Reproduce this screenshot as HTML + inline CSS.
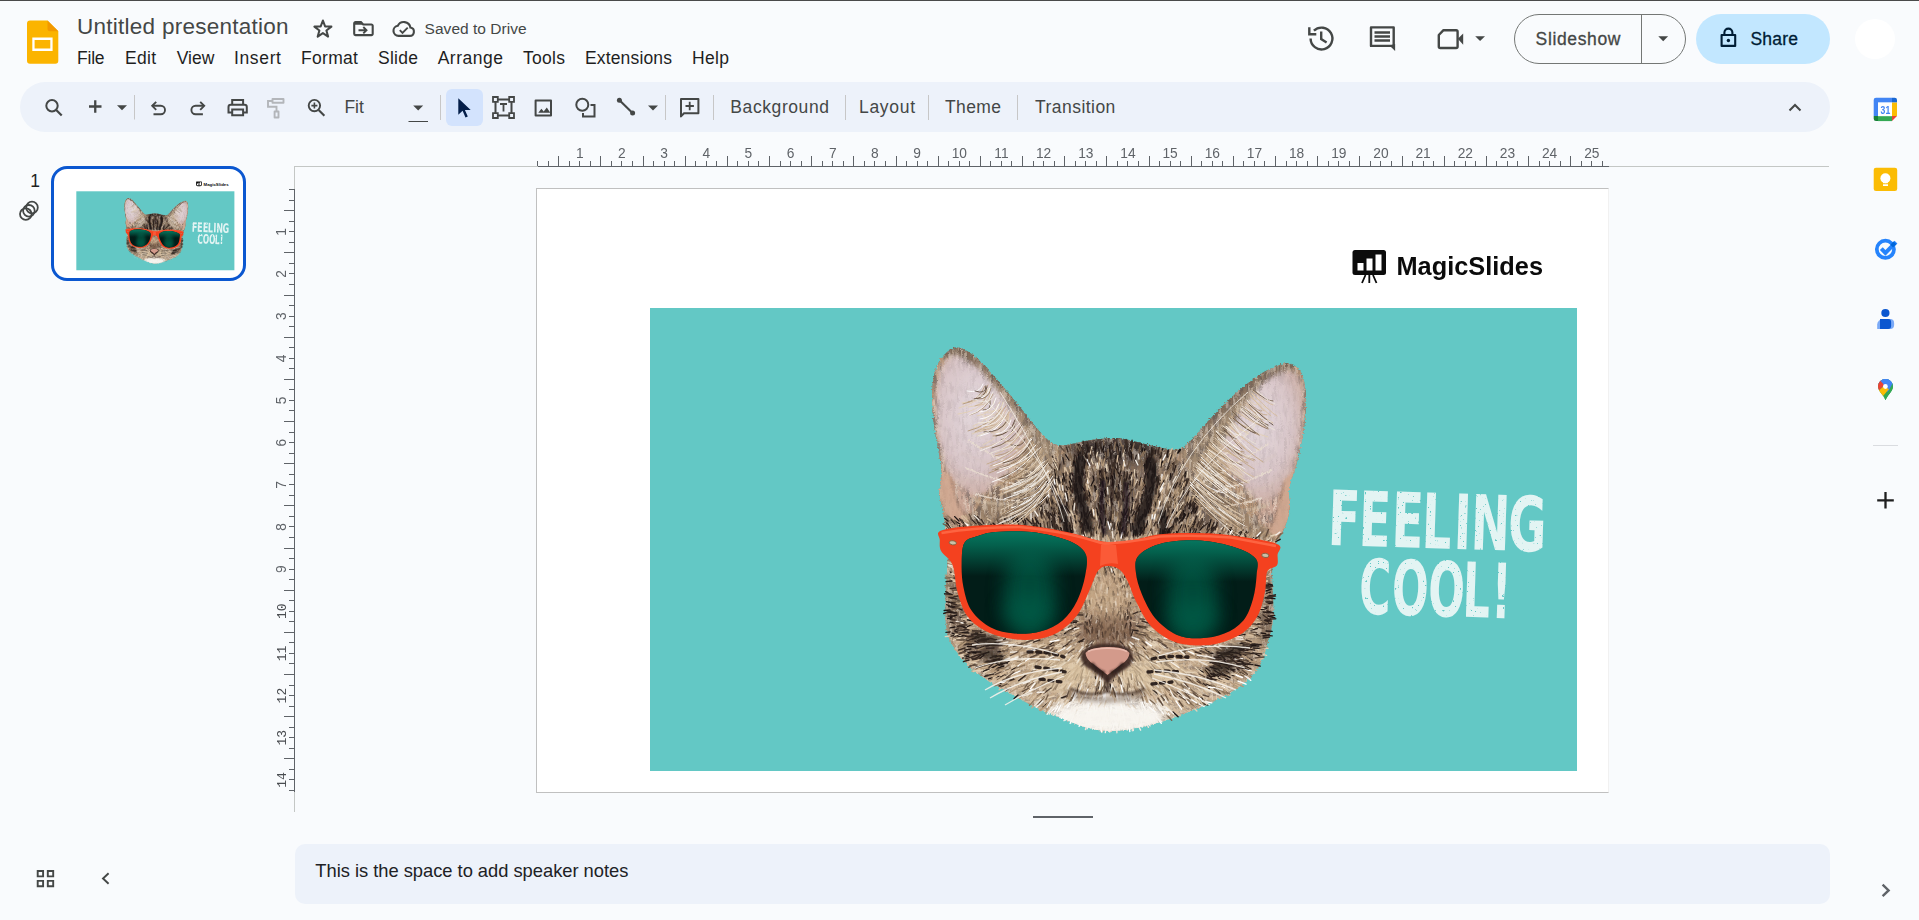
<!DOCTYPE html>
<html lang="en">
<head>
<meta charset="utf-8">
<title>Untitled presentation - Google Slides</title>
<style>
*{box-sizing:border-box;margin:0;padding:0}
html,body{width:1919px;height:920px;overflow:hidden;background:#f9fbfd;font-family:"Liberation Sans",sans-serif;color:#444746}
#app{position:relative;width:1919px;height:920px;overflow:hidden;background:#f9fbfd}
.abs{position:absolute}
.t{position:absolute;white-space:nowrap;line-height:1;font-size:17.5px;color:#444746}
#topline{left:0;top:0;width:1919px;height:1px;background:#4a4a4a}
#toolbar{left:20px;top:82px;width:1810px;height:50px;border-radius:25px;background:#edf2fa}
#selbtn{left:446px;top:89px;width:37px;height:37px;border-radius:6px;background:#d3e3fd}
#slideshow{left:1514px;top:14px;width:172px;height:50px;border-radius:25px;border:1px solid #747775}
#ssdiv{left:1641px;top:14px;width:1px;height:50px;background:#747775}
#share{left:1696px;top:14px;width:134px;height:50px;border-radius:25px;background:#c2e7ff}
#avatar{left:1855px;top:19px;width:40px;height:40px;border-radius:50%;background:#fff}
#thumb{left:51px;top:166px;width:195px;height:115px;border-radius:16px;border:3px solid #0b57d0;background:#fff;overflow:hidden}
#slide{left:536px;top:188px;width:1073px;height:605px;background:#fff;border:1px solid #c0c0c0;border-right-color:#f1f1f1}
#notes{left:295px;top:844px;width:1535px;height:60px;border-radius:10px;background:#edf2fa}
#handle{left:1033px;top:816px;width:60px;height:2px;background:#5f6368}
.menu{color:#1f1f1f}
</style>
</head>
<body>
<div id="app">
<div class="abs" id="topline"></div>

<!-- header text -->
<div class="t" id="title" style="color:#444746;left:77.1px;top:16.4px;font-size:22.5px;letter-spacing:0.25px">Untitled presentation</div>
<div class="t" id="saved" style="left:424.6px;top:21.3px;font-size:15.5px;letter-spacing:0.03px">Saved to Drive</div>
<div class="t menu" id="m1" style="left:77.0px;top:49.8px;font-size:17.5px;letter-spacing:-0.20px">File</div>
<div class="t menu" id="m2" style="left:125.0px;top:49.8px;font-size:17.5px;letter-spacing:0.28px">Edit</div>
<div class="t menu" id="m3" style="left:176.8px;top:49.8px;font-size:17.5px;letter-spacing:-0.04px">View</div>
<div class="t menu" id="m4" style="left:234.0px;top:49.8px;font-size:17.5px;letter-spacing:0.64px">Insert</div>
<div class="t menu" id="m5" style="left:301.0px;top:49.8px;font-size:17.5px;letter-spacing:0.31px">Format</div>
<div class="t menu" id="m6" style="left:378.0px;top:49.8px;font-size:17.5px;letter-spacing:0.27px">Slide</div>
<div class="t menu" id="m7" style="left:437.7px;top:49.8px;font-size:17.5px;letter-spacing:0.51px">Arrange</div>
<div class="t menu" id="m8" style="left:523.0px;top:49.8px;font-size:17.5px;letter-spacing:0.29px">Tools</div>
<div class="t menu" id="m9" style="left:585.0px;top:49.8px;font-size:17.5px;letter-spacing:0.15px">Extensions</div>
<div class="t menu" id="m10" style="left:692.0px;top:49.8px;font-size:17.5px;letter-spacing:0.33px">Help</div>

<div class="abs" id="slideshow"></div>
<div class="abs" id="ssdiv"></div>
<div class="abs" id="share"></div>
<div class="abs" id="avatar"></div>
<div class="t" id="sstext" style="-webkit-text-stroke:.3px #444746;left:1535.6px;color:#444746;top:31.2px;font-size:17.5px;letter-spacing:0.64px">Slideshow</div>
<div class="t" id="sharetext" style="-webkit-text-stroke:.3px #001d35;left:1750.4px;color:#001d35;top:30.6px;font-size:17.5px;letter-spacing:0.22px">Share</div>

<!-- toolbar -->
<div class="abs" id="toolbar"></div>
<div class="abs" id="selbtn"></div>
<div class="t" id="fit" style="left:344.4px;top:99.1px;font-size:17.5px;letter-spacing:0.00px">Fit</div>
<div class="t" id="tb1" style="left:730.3px;top:99.2px;font-size:17.5px;letter-spacing:0.59px">Background</div>
<div class="t" id="tb2" style="left:859.0px;top:99.2px;font-size:17.5px;letter-spacing:0.69px">Layout</div>
<div class="t" id="tb3" style="left:945.0px;top:99.2px;font-size:17.5px;letter-spacing:0.38px">Theme</div>
<div class="t" id="tb4" style="left:1035.0px;top:99.2px;font-size:17.5px;letter-spacing:0.46px">Transition</div>

<!-- ICONS-HEADER -->
<svg class="abs" id="hdricons" style="left:0;top:0" width="1919" height="140" viewBox="0 0 1919 140" fill="none" stroke="#444746" stroke-width="2" stroke-linecap="butt" stroke-linejoin="miter">
<!-- slides logo -->
<g stroke="none">
<path d="M30 20.5h17.5l10.8 10.8v29.4a3 3 0 0 1-3 3H30a3 3 0 0 1-3-3V23.5a3 3 0 0 1 3-3z" fill="#fbb400"/>
<path d="M47.5 20.5l10.8 10.8H50a2.5 2.5 0 0 1-2.500-2.500z" fill="#f29900"/>
<path d="M32.300 37.600h20.300v13.300H32.300z M34.600 39.900v8.700h15.700v-8.700z" fill="#fff" fill-rule="evenodd"/>
</g>
<!-- star -->
<path d="M322.9 20.5L325.1 26.4L331.4 26.6L326.4 30.5L328.1 36.6L322.9 33.1L317.7 36.6L319.4 30.5L314.4 26.6L320.7 26.4z" stroke-width="2.050" stroke-linejoin="round"/>
<!-- move folder -->
<path d="M354.200 23.300a1.300 1.300 0 0 1 1.300-1.300h5.400l2.300 2.500h8.200a1.300 1.300 0 0 1 1.300 1.300v8a1.300 1.300 0 0 1-1.300 1.300h-15.900a1.300 1.300 0 0 1-1.300-1.300z" stroke-width="2.100"/><path d="M354.200 22h7l2 2.800h-9z" fill="#444746" stroke="none"/>
<path d="M358.500 30.200h7.500M363.300 27l3.200 3.200-3.200 3.200" stroke-width="1.900"/>
<!-- cloud done -->
<g transform="translate(0 .9)"><path d="M398.500 35h11.200a4.200 4.200 0 0 0 .700-8.340a6.700 6.700 0 0 0-12.600-1.800a5.100 5.100 0 0 0 .700 10.140z" stroke-width="2.100"/>
<path d="M399.800 29.300l2.700 2.700 5.200-5.200" stroke-width="1.900"/></g>
<!-- history -->
<g stroke-width="2.400">
<path d="M1310.600 38.500a10.900 10.900 0 1 0 3.300-7.800"/>
<path d="M1309.300 27.300v7h7" stroke-linejoin="miter"/>
<path d="M1321.200 31.500v7.600l5.400 3.300"/>
</g>
<!-- comment -->
<path d="M1371 27.400h22.700v18.500h-22.700z" stroke-width="2.400" stroke-linejoin="round"/>
<path d="M1389.500 45.500l5.600 5.500v-7z" fill="#444746" stroke="none"/>
<path d="M1374.500 32.500h15.500M1374.500 36.500h15.500M1374.500 40.500h15.500" stroke-width="2.300"/>
<!-- camera -->
<path d="M1443.500 30.200h12.600a1.500 1.500 0 0 1 1.500 1.500v14.800a1.500 1.500 0 0 1-1.500 1.500h-15.800a1.500 1.500 0 0 1-1.500-1.500v-11.500z" stroke-width="2.400" stroke-linejoin="round"/>
<path d="M1457.800 38.800l5.400-5.400v11.400z" fill="#444746" stroke="none"/>
<path d="M1475.200 36.200h9.800l-4.900 4.900z" fill="#444746" stroke="none"/>
<!-- slideshow caret -->
<path d="M1658.300 36.300h9.800l-4.900 4.900z" fill="#444746" stroke="none"/>
<!-- lock -->
<g stroke="#001d35" stroke-width="2.100">
<path d="M1721.600 35h13.600v10.900h-13.600z" stroke-linejoin="round"/>
<path d="M1724.400 35v-2.400a4 4 0 0 1 8 0v2.400"/>
<circle cx="1728.400" cy="40.500" r="1.700" fill="#001d35" stroke="none"/>
</g>

<!-- TOOLBAR ICONS -->
<!-- search -->
<circle cx="52" cy="105.700" r="5.700" stroke-width="2"/>
<path d="M56.200 110l5.500 5.500" stroke-width="2.200"/>
<!-- plus -->
<path d="M89 106.500h12.500M95.250 100.300v12.500" stroke-width="2.300"/>
<path d="M117 105.200h10l-5 5z" fill="#444746" stroke="none"/>
<path d="M134.500 95v24.500" stroke="#c7c7c7" stroke-width="1"/>
<!-- undo -->
<path d="M156.200 101.800l-4 4 4 4" stroke-width="1.900"/>
<path d="M152.500 105.800h8.300a4.200 4.200 0 0 1 0 8.400h-7.300" stroke-width="1.900"/>
<!-- redo -->
<path d="M200.200 101.800l4 4-4 4" stroke-width="1.900"/>
<path d="M203.900 105.800h-8.300a4.200 4.200 0 0 0 0 8.400h7.300" stroke-width="1.900"/>
<!-- print -->
<g stroke-width="2">
<path d="M232 112.400h-3.500v-5.400a2.300 2.300 0 0 1 2.300-2.300h13.700a2.300 2.300 0 0 1 2.300 2.300v5.400h-3.500"/>
<path d="M232.200 104.500v-4.500h10.900v4.500"/>
<path d="M232.200 109.500h10.900v5.800h-10.900z"/>
</g>
<!-- paint format (disabled) -->
<g stroke="#b3b6ba" stroke-width="1.900">
<path d="M272.500 99h11v3.800h-11z" stroke-linejoin="round"/>
<path d="M272.500 101h-4.500v5.800h8.500v4.500"/>
<path d="M274.600 111.500h3.900v6h-3.900z" stroke-linejoin="round"/>
</g>
<!-- zoom -->
<circle cx="314.400" cy="105.600" r="5.700" stroke-width="1.900"/>
<path d="M318.600 109.900l5.800 5.800" stroke-width="2.100"/>
<path d="M311.400 105.600h6M314.400 102.600v6" stroke-width="1.600"/>
<!-- fit caret -->
<path d="M413.200 105.400h10l-5 5z" fill="#444746" stroke="none"/>
<path d="M408.500 121.500h19.500" stroke-width="1"/>
<path d="M440.500 95v25" stroke="#c7c7c7" stroke-width="1"/>
<!-- cursor -->
<path d="M458.300 98.200v16.500l4.300-3.900 2.900 6.600 2.300-1-2.900-6.500h5.800z" fill="#041e49" stroke="none"/>
<!-- textbox -->
<g stroke-width="2">
<path d="M495.500 99.500h16v16h-16z"/>
<g fill="#edf2fa" stroke-width="1.800"><path d="M493 97h4.800v4.800H493zM509.200 97h4.800v4.800h-4.800zM493 113.200h4.800v4.800H493zM509.200 113.200h4.800v4.800h-4.800z"/></g>
<path d="M500 104h7M503.500 104v7.500" stroke-width="1.800"/>
</g>
<!-- image -->
<path d="M535.600 100.400h15.400v15.200h-15.400z" stroke-width="2" stroke-linejoin="round"/>
<path d="M538.300 112.700l3.100-4 2.300 2.800 3.100-4.100 3.500 5.300z" fill="#444746" stroke="none"/>
<!-- shapes -->
<circle cx="582.300" cy="104.700" r="6" stroke-width="2"/>
<path d="M590.500 105h4v11.500h-11.500v-3.500" stroke-width="2"/>
<!-- line -->
<path d="M619.500 100.300l13 12.800" stroke-width="2.100"/>
<circle cx="619.400" cy="100.200" r="2.500" fill="#444746" stroke="none"/>
<circle cx="632.600" cy="113" r="2.500" fill="#444746" stroke="none"/>
<path d="M648 105.400h10l-5 5z" fill="#444746" stroke="none"/>
<path d="M665.500 95v25" stroke="#c7c7c7" stroke-width="1"/>
<!-- add comment -->
<path d="M681 113.200v-14.200h17.400v14.200h-14.400l-3 3.200z" stroke-width="2" stroke-linejoin="round"/>
<path d="M685.500 106h8.400M689.700 101.800v8.400" stroke-width="1.800"/>
<path d="M713.500 95v25" stroke="#c7c7c7" stroke-width="1"/>
<path d="M845.500 95v25M928.500 95v25M1017.500 95v25" stroke="#c7c7c7" stroke-width="1"/>
<!-- collapse chevron -->
<path d="M1789.500 110.500l5.500-5.500 5.500 5.500" stroke-width="2"/>
</svg>
<!-- /ICONS-HEADER -->

<!-- filmstrip -->
<div class="t" id="num1" style="left:30.3px;color:#1f1f1f;top:173.1px;font-size:17.5px;letter-spacing:0.00px">1</div>
<div class="abs" id="thumb"><!-- THUMB --><svg class="abs" id="thumbsvg" style="left:3.300px;top:2.300px" width="182.900" height="103" viewBox="537 189 1072 604">
<rect x="650" y="308" width="927" height="463" fill="#63c8c5"/>
<use href="#cat"/>
<use href="#mslogo"/>
<text x="1396.500" y="275.300" font-family="'Liberation Sans',sans-serif" font-weight="700" font-size="25.500" fill="#0b0b0b" textLength="146.500" lengthAdjust="spacingAndGlyphs">MagicSlides</text>
<g filter="url(#distress)"><g transform="rotate(1.800 1436 553)" font-family="'DejaVu Sans Condensed','DejaVu Sans',sans-serif" font-weight="700" font-size="76" fill="#e3f4f3">
<text transform="translate(0 548.200) scale(.68 1)" x="1952.100 1997.200 2045.300 2090 2137.100 2162.100 2216.700">FEELING</text>
<text transform="translate(0 616) scale(.63 1)" x="2159.400 2211.300 2269 2323.800 2369.600">COOL!</text>
</g></g>
</svg><!-- /THUMB --></div>

<!-- RULERS -->
<svg class="abs" id="rulers" style="left:0;top:140px" width="1919" height="700" viewBox="0 140 1919 700" font-family="'Liberation Sans',sans-serif" font-size="13.75" fill="#5f6368">
<rect x="294" y="166" width="1535" height="1" fill="#c4c7c5"/>
<rect x="294" y="166" width="1" height="646" fill="#c4c7c5"/>
<rect x="538" y="166" width="1071" height="1" fill="#5f6368"/>
<rect x="294" y="189" width="1" height="603" fill="#5f6368"/>
<path d="M537 161h1v5h-1zM548 161h1v5h-1zM558 156h1v10h-1zM569 161h1v5h-1zM579 161h1v5h-1zM590 161h1v5h-1zM600 156h1v10h-1zM611 161h1v5h-1zM621 161h1v5h-1zM632 161h1v5h-1zM643 156h1v10h-1zM653 161h1v5h-1zM664 161h1v5h-1zM674 161h1v5h-1zM685 156h1v10h-1zM695 161h1v5h-1zM706 161h1v5h-1zM716 161h1v5h-1zM727 156h1v10h-1zM737 161h1v5h-1zM748 161h1v5h-1zM758 161h1v5h-1zM769 156h1v10h-1zM780 161h1v5h-1zM790 161h1v5h-1zM801 161h1v5h-1zM811 156h1v10h-1zM822 161h1v5h-1zM832 161h1v5h-1zM843 161h1v5h-1zM853 156h1v10h-1zM864 161h1v5h-1zM874 161h1v5h-1zM885 161h1v5h-1zM896 156h1v10h-1zM906 161h1v5h-1zM917 161h1v5h-1zM927 161h1v5h-1zM938 156h1v10h-1zM948 161h1v5h-1zM959 161h1v5h-1zM969 161h1v5h-1zM980 156h1v10h-1zM990 161h1v5h-1zM1001 161h1v5h-1zM1011 161h1v5h-1zM1022 156h1v10h-1zM1033 161h1v5h-1zM1043 161h1v5h-1zM1054 161h1v5h-1zM1064 156h1v10h-1zM1075 161h1v5h-1zM1085 161h1v5h-1zM1096 161h1v5h-1zM1106 156h1v10h-1zM1117 161h1v5h-1zM1127 161h1v5h-1zM1138 161h1v5h-1zM1149 156h1v10h-1zM1159 161h1v5h-1zM1170 161h1v5h-1zM1180 161h1v5h-1zM1191 156h1v10h-1zM1201 161h1v5h-1zM1212 161h1v5h-1zM1222 161h1v5h-1zM1233 156h1v10h-1zM1243 161h1v5h-1zM1254 161h1v5h-1zM1264 161h1v5h-1zM1275 156h1v10h-1zM1286 161h1v5h-1zM1296 161h1v5h-1zM1307 161h1v5h-1zM1317 156h1v10h-1zM1328 161h1v5h-1zM1338 161h1v5h-1zM1349 161h1v5h-1zM1359 156h1v10h-1zM1370 161h1v5h-1zM1380 161h1v5h-1zM1391 161h1v5h-1zM1402 156h1v10h-1zM1412 161h1v5h-1zM1423 161h1v5h-1zM1433 161h1v5h-1zM1444 156h1v10h-1zM1454 161h1v5h-1zM1465 161h1v5h-1zM1475 161h1v5h-1zM1486 156h1v10h-1zM1496 161h1v5h-1zM1507 161h1v5h-1zM1517 161h1v5h-1zM1528 156h1v10h-1zM1539 161h1v5h-1zM1549 161h1v5h-1zM1560 161h1v5h-1zM1570 156h1v10h-1zM1581 161h1v5h-1zM1591 161h1v5h-1zM1602 161h1v5h-1z" fill="#5f6368"/>
<path d="M289 189h5v1h-5zM289 200h5v1h-5zM284 210h10v1h-10zM289 221h5v1h-5zM289 231h5v1h-5zM289 242h5v1h-5zM284 252h10v1h-10zM289 263h5v1h-5zM289 273h5v1h-5zM289 284h5v1h-5zM284 295h10v1h-10zM289 305h5v1h-5zM289 316h5v1h-5zM289 326h5v1h-5zM284 337h10v1h-10zM289 347h5v1h-5zM289 358h5v1h-5zM289 368h5v1h-5zM284 379h10v1h-10zM289 389h5v1h-5zM289 400h5v1h-5zM289 410h5v1h-5zM284 421h10v1h-10zM289 432h5v1h-5zM289 442h5v1h-5zM289 453h5v1h-5zM284 463h10v1h-10zM289 474h5v1h-5zM289 484h5v1h-5zM289 495h5v1h-5zM284 505h10v1h-10zM289 516h5v1h-5zM289 526h5v1h-5zM289 537h5v1h-5zM284 548h10v1h-10zM289 558h5v1h-5zM289 569h5v1h-5zM289 579h5v1h-5zM284 590h10v1h-10zM289 600h5v1h-5zM289 611h5v1h-5zM289 621h5v1h-5zM284 632h10v1h-10zM289 642h5v1h-5zM289 653h5v1h-5zM289 663h5v1h-5zM284 674h10v1h-10zM289 685h5v1h-5zM289 695h5v1h-5zM289 706h5v1h-5zM284 716h10v1h-10zM289 727h5v1h-5zM289 737h5v1h-5zM289 748h5v1h-5zM284 758h10v1h-10zM289 769h5v1h-5zM289 779h5v1h-5zM289 790h5v1h-5z" fill="#5f6368"/>
<text x="579.8" y="158" text-anchor="middle">1</text>
<text x="621.9" y="158" text-anchor="middle">2</text>
<text x="664.1" y="158" text-anchor="middle">3</text>
<text x="706.3" y="158" text-anchor="middle">4</text>
<text x="748.4" y="158" text-anchor="middle">5</text>
<text x="790.6" y="158" text-anchor="middle">6</text>
<text x="832.8" y="158" text-anchor="middle">7</text>
<text x="874.9" y="158" text-anchor="middle">8</text>
<text x="917.1" y="158" text-anchor="middle">9</text>
<text x="959.3" y="158" text-anchor="middle">10</text>
<text x="1001.4" y="158" text-anchor="middle">11</text>
<text x="1043.6" y="158" text-anchor="middle">12</text>
<text x="1085.8" y="158" text-anchor="middle">13</text>
<text x="1127.9" y="158" text-anchor="middle">14</text>
<text x="1170.1" y="158" text-anchor="middle">15</text>
<text x="1212.3" y="158" text-anchor="middle">16</text>
<text x="1254.4" y="158" text-anchor="middle">17</text>
<text x="1296.6" y="158" text-anchor="middle">18</text>
<text x="1338.8" y="158" text-anchor="middle">19</text>
<text x="1380.9" y="158" text-anchor="middle">20</text>
<text x="1423.1" y="158" text-anchor="middle">21</text>
<text x="1465.3" y="158" text-anchor="middle">22</text>
<text x="1507.4" y="158" text-anchor="middle">23</text>
<text x="1549.6" y="158" text-anchor="middle">24</text>
<text x="1591.8" y="158" text-anchor="middle">25</text>
<text transform="translate(286 231.8) rotate(-90)" text-anchor="middle">1</text>
<text transform="translate(286 273.9) rotate(-90)" text-anchor="middle">2</text>
<text transform="translate(286 316.1) rotate(-90)" text-anchor="middle">3</text>
<text transform="translate(286 358.3) rotate(-90)" text-anchor="middle">4</text>
<text transform="translate(286 400.4) rotate(-90)" text-anchor="middle">5</text>
<text transform="translate(286 442.6) rotate(-90)" text-anchor="middle">6</text>
<text transform="translate(286 484.8) rotate(-90)" text-anchor="middle">7</text>
<text transform="translate(286 526.9) rotate(-90)" text-anchor="middle">8</text>
<text transform="translate(286 569.1) rotate(-90)" text-anchor="middle">9</text>
<text transform="translate(286 611.3) rotate(-90)" text-anchor="middle" font-family="'Liberation Mono','DejaVu Sans Mono',monospace" font-size="13" fill="#4a4d51">10</text>
<text transform="translate(286 653.4) rotate(-90)" text-anchor="middle" font-family="'Liberation Mono','DejaVu Sans Mono',monospace" font-size="13" fill="#4a4d51">11</text>
<text transform="translate(286 695.6) rotate(-90)" text-anchor="middle" font-family="'Liberation Mono','DejaVu Sans Mono',monospace" font-size="13" fill="#4a4d51">12</text>
<text transform="translate(286 737.8) rotate(-90)" text-anchor="middle" font-family="'Liberation Mono','DejaVu Sans Mono',monospace" font-size="13" fill="#4a4d51">13</text>
<text transform="translate(286 779.9) rotate(-90)" text-anchor="middle" font-family="'Liberation Mono','DejaVu Sans Mono',monospace" font-size="13" fill="#4a4d51">14</text>
</svg>
<!-- /RULERS -->

<!-- slide -->
<div class="abs" id="slide"><!-- SLIDE --><svg class="abs" id="slidesvg" style="left:0;top:0" width="1072" height="604" viewBox="537 189 1072 604">
<rect x="650" y="308" width="927" height="463" fill="#63c8c5"/>

<defs>
<clipPath id="headclip"><path d="M953.8 347.9C959.4 346.3 964.7 348.9 971.7 353.9C978.7 358.9 987.6 369.0 995.6 377.8C1003.6 386.6 1012.3 397.7 1019.5 406.5C1026.7 415.3 1033.1 424.2 1038.7 430.4C1044.3 436.6 1048.2 441.2 1053.0 443.6C1057.8 446.0 1060.9 445.3 1067.3 444.7C1073.7 444.1 1083.2 441.1 1091.2 440.0C1099.2 438.9 1108.1 437.8 1115.2 438.0C1122.3 438.2 1126.8 439.7 1133.9 441.2C1141.0 442.7 1150.6 445.7 1157.8 447.1C1165.0 448.5 1171.7 450.3 1176.9 449.5C1182.1 448.7 1183.3 447.6 1188.9 442.4C1194.5 437.2 1202.8 426.5 1210.4 418.5C1218.0 410.5 1226.3 401.7 1234.3 394.5C1242.3 387.3 1251.0 380.2 1258.2 375.4C1265.4 370.6 1272.1 367.9 1277.3 365.9C1282.5 363.9 1285.3 362.3 1289.3 363.5C1293.3 364.7 1298.5 367.4 1301.3 373.0C1304.1 378.6 1305.6 387.3 1306.0 396.9C1306.4 406.5 1305.2 419.2 1303.6 430.4C1302.0 441.6 1298.9 454.3 1296.5 463.9C1294.1 473.5 1290.5 479.8 1289.3 487.8C1288.1 495.8 1290.5 504.1 1289.3 511.7C1288.1 519.3 1284.5 527.7 1282.1 533.2C1279.7 538.8 1276.7 538.4 1275.0 545.0C1273.3 551.6 1272.4 560.8 1272.1 572.6C1271.8 584.4 1274.1 603.7 1273.3 615.6C1272.5 627.5 1269.9 635.5 1267.3 644.3C1264.7 653.1 1262.6 661.0 1257.8 668.2C1253.0 675.4 1247.1 681.3 1238.7 687.3C1230.3 693.3 1218.8 698.9 1207.6 704.1C1196.4 709.3 1183.7 714.4 1171.7 718.4C1159.8 722.4 1146.5 725.9 1135.9 728.0C1125.3 730.1 1116.5 731.2 1108.0 731.0C1099.5 730.8 1092.6 729.1 1085.0 727.0C1077.4 724.9 1071.1 721.8 1062.6 718.4C1054.1 715.0 1043.1 710.9 1033.9 706.5C1024.7 702.1 1016.0 696.9 1007.6 692.1C999.2 687.3 991.3 683.4 983.7 677.8C976.1 672.2 968.2 665.9 962.2 658.7C956.2 651.5 950.6 643.9 947.8 634.7C945.0 625.5 945.6 613.2 945.4 603.7C945.2 594.2 946.2 587.2 946.6 577.4C947.0 567.6 948.6 556.0 948.0 545.0C947.4 534.0 944.4 520.4 943.0 511.7C941.6 503.0 939.6 499.0 939.4 492.6C939.2 486.2 942.0 480.6 941.8 473.4C941.6 466.2 939.7 458.3 938.3 449.5C936.9 440.7 934.5 430.8 933.5 420.8C932.5 410.9 931.5 399.4 932.3 389.8C933.1 380.2 934.6 370.5 938.2 363.5C941.8 356.5 948.2 349.5 953.8 347.9Z"/></clipPath>
<clipPath id="lensLc"><path d="M964.5 542.7C967.2 538.2 972.8 537.8 978.0 536.0C983.2 534.2 986.7 532.7 995.6 532.0C1004.5 531.3 1019.5 530.6 1031.5 532.0C1043.5 533.4 1058.3 536.7 1067.3 540.3C1076.3 543.9 1082.3 547.7 1085.3 553.5C1088.3 559.3 1086.7 567.0 1085.3 575.0C1083.9 583.0 1080.7 593.7 1076.9 601.3C1073.1 608.9 1068.6 615.4 1062.6 620.4C1056.6 625.4 1049.0 629.0 1041.0 631.2C1033.0 633.4 1023.2 634.2 1014.8 633.6C1006.4 633.0 998.0 631.4 990.8 627.6C983.6 623.8 976.3 617.6 971.7 610.8C967.1 604.0 965.1 594.9 963.4 586.9C961.7 578.9 961.5 570.4 961.7 563.0C961.9 555.6 961.8 547.2 964.5 542.7Z"/></clipPath>
<clipPath id="lensRc"><path d="M1138.3 555.9C1142.3 551.1 1150.2 546.5 1159.8 543.9C1169.3 541.3 1183.6 539.9 1195.6 540.3C1207.5 540.7 1221.5 543.3 1231.5 546.3C1241.5 549.3 1251.2 553.4 1255.4 558.2C1259.6 563.0 1257.0 568.2 1256.6 575.0C1256.2 581.8 1255.2 591.3 1253.0 598.9C1250.8 606.5 1248.2 614.6 1243.4 620.4C1238.6 626.2 1231.5 630.6 1224.3 633.6C1217.1 636.6 1208.4 638.1 1200.4 638.3C1192.4 638.5 1184.1 638.1 1176.5 634.7C1168.9 631.3 1160.8 624.8 1155.0 618.0C1149.2 611.2 1145.0 601.7 1141.8 594.1C1138.6 586.5 1136.5 579.0 1135.9 572.6C1135.3 566.2 1134.3 560.7 1138.3 555.9Z"/></clipPath>
<filter id="b1" x="900" y="330" width="440" height="420" filterUnits="userSpaceOnUse"><feGaussianBlur stdDeviation="1.2"/></filter>
<filter id="b2" x="900" y="330" width="440" height="420" filterUnits="userSpaceOnUse"><feGaussianBlur stdDeviation="2.5"/></filter>
<filter id="b4" x="900" y="330" width="440" height="420" filterUnits="userSpaceOnUse"><feGaussianBlur stdDeviation="5"/></filter>
<filter id="b8" x="900" y="330" width="440" height="420" filterUnits="userSpaceOnUse"><feGaussianBlur stdDeviation="9"/></filter>
<filter id="distress" x="1320" y="470" width="240" height="170" filterUnits="userSpaceOnUse"><feTurbulence type="fractalNoise" baseFrequency="0.4" numOctaves="2" seed="5" result="n"/><feColorMatrix in="n" type="matrix" values="0 0 0 0 0  0 0 0 0 0  0 0 0 0 0  0 0 0 -14 10.9" result="m"/><feComposite in="SourceGraphic" in2="m" operator="in"/></filter>
<filter id="fuzz" x="915" y="335" width="410" height="410" filterUnits="userSpaceOnUse">
<feTurbulence type="fractalNoise" baseFrequency="0.55" numOctaves="2" seed="3" result="n"/>
<feDisplacementMap in="SourceGraphic" in2="n" scale="3.5" xChannelSelector="R" yChannelSelector="G"/>
</filter>
<filter id="furV" x="920" y="340" width="400" height="400" filterUnits="userSpaceOnUse">
<feTurbulence type="fractalNoise" baseFrequency="0.32 0.07" numOctaves="3" seed="7" result="n"/>
<feColorMatrix in="n" type="matrix" values="0 0 0 0 0.13  0 0 0 0 0.10  0 0 0 0 0.09  3.2 3.2 0 0 -2.95"/>
</filter>
<filter id="furVl" x="920" y="340" width="400" height="400" filterUnits="userSpaceOnUse">
<feTurbulence type="fractalNoise" baseFrequency="0.36 0.08" numOctaves="2" seed="23" result="n"/>
<feColorMatrix in="n" type="matrix" values="0 0 0 0 0.90  0 0 0 0 0.80  0 0 0 0 0.68  0 3.4 3.4 0 -3.25"/>
</filter>
<filter id="furH" x="920" y="340" width="400" height="400" filterUnits="userSpaceOnUse">
<feTurbulence type="fractalNoise" baseFrequency="0.09 0.3" numOctaves="3" seed="11" result="n"/>
<feColorMatrix in="n" type="matrix" values="0 0 0 0 0.16  0 0 0 0 0.12  0 0 0 0 0.10  3.2 3.2 0 0 -3.0"/>
</filter>
<linearGradient id="headg" x1="0" y1="440" x2="0" y2="730" gradientUnits="userSpaceOnUse">
<stop offset="0" stop-color="#826c5a"/><stop offset=".35" stop-color="#a48a70"/><stop offset=".75" stop-color="#bfa486"/><stop offset="1" stop-color="#d3c0a8"/>
</linearGradient>
<linearGradient id="fadeV" x1="0" y1="520" x2="0" y2="600" gradientUnits="userSpaceOnUse"><stop offset="0" stop-color="#fff"/><stop offset="1" stop-color="#000"/></linearGradient>
<mask id="mTop" maskUnits="userSpaceOnUse" x="920" y="340" width="400" height="400"><rect x="920" y="340" width="400" height="400" fill="url(#fadeV)"/></mask>
<linearGradient id="fadeV2" x1="0" y1="520" x2="0" y2="600" gradientUnits="userSpaceOnUse"><stop offset="0" stop-color="#000"/><stop offset="1" stop-color="#fff"/></linearGradient>
<mask id="mBot" maskUnits="userSpaceOnUse" x="920" y="340" width="400" height="400"><rect x="920" y="340" width="400" height="400" fill="url(#fadeV2)"/></mask>
<linearGradient id="lensTop" x1="0" y1="0" x2="0" y2="1"><stop offset="0" stop-color="#067a62"/><stop offset=".14" stop-color="#04604c"/><stop offset=".42" stop-color="#04604c" stop-opacity="0"/></linearGradient>
<radialGradient id="earg" cx=".45" cy=".4" r=".6"><stop offset="0" stop-color="#e4d9df"/><stop offset=".7" stop-color="#d8c5c8"/><stop offset="1" stop-color="#cdb0a8"/></radialGradient>
</defs>
<g id="cat">
<g filter="url(#fuzz)">
<path d="M953.8 347.9C959.4 346.3 964.7 348.9 971.7 353.9C978.7 358.9 987.6 369.0 995.6 377.8C1003.6 386.6 1012.3 397.7 1019.5 406.5C1026.7 415.3 1033.1 424.2 1038.7 430.4C1044.3 436.6 1048.2 441.2 1053.0 443.6C1057.8 446.0 1060.9 445.3 1067.3 444.7C1073.7 444.1 1083.2 441.1 1091.2 440.0C1099.2 438.9 1108.1 437.8 1115.2 438.0C1122.3 438.2 1126.8 439.7 1133.9 441.2C1141.0 442.7 1150.6 445.7 1157.8 447.1C1165.0 448.5 1171.7 450.3 1176.9 449.5C1182.1 448.7 1183.3 447.6 1188.9 442.4C1194.5 437.2 1202.8 426.5 1210.4 418.5C1218.0 410.5 1226.3 401.7 1234.3 394.5C1242.3 387.3 1251.0 380.2 1258.2 375.4C1265.4 370.6 1272.1 367.9 1277.3 365.9C1282.5 363.9 1285.3 362.3 1289.3 363.5C1293.3 364.7 1298.5 367.4 1301.3 373.0C1304.1 378.6 1305.6 387.3 1306.0 396.9C1306.4 406.5 1305.2 419.2 1303.6 430.4C1302.0 441.6 1298.9 454.3 1296.5 463.9C1294.1 473.5 1290.5 479.8 1289.3 487.8C1288.1 495.8 1290.5 504.1 1289.3 511.7C1288.1 519.3 1284.5 527.7 1282.1 533.2C1279.7 538.8 1276.7 538.4 1275.0 545.0C1273.3 551.6 1272.4 560.8 1272.1 572.6C1271.8 584.4 1274.1 603.7 1273.3 615.6C1272.5 627.5 1269.9 635.5 1267.3 644.3C1264.7 653.1 1262.6 661.0 1257.8 668.2C1253.0 675.4 1247.1 681.3 1238.7 687.3C1230.3 693.3 1218.8 698.9 1207.6 704.1C1196.4 709.3 1183.7 714.4 1171.7 718.4C1159.8 722.4 1146.5 725.9 1135.9 728.0C1125.3 730.1 1116.5 731.2 1108.0 731.0C1099.5 730.8 1092.6 729.1 1085.0 727.0C1077.4 724.9 1071.1 721.8 1062.6 718.4C1054.1 715.0 1043.1 710.9 1033.9 706.5C1024.7 702.1 1016.0 696.9 1007.6 692.1C999.2 687.3 991.3 683.4 983.7 677.8C976.1 672.2 968.2 665.9 962.2 658.7C956.2 651.5 950.6 643.9 947.8 634.7C945.0 625.5 945.6 613.2 945.4 603.7C945.2 594.2 946.2 587.2 946.6 577.4C947.0 567.6 948.6 556.0 948.0 545.0C947.4 534.0 944.4 520.4 943.0 511.7C941.6 503.0 939.6 499.0 939.4 492.6C939.2 486.2 942.0 480.6 941.8 473.4C941.6 466.2 939.7 458.3 938.3 449.5C936.9 440.7 934.5 430.8 933.5 420.8C932.5 410.9 931.5 399.4 932.3 389.8C933.1 380.2 934.6 370.5 938.2 363.5C941.8 356.5 948.2 349.5 953.8 347.9Z" fill="url(#headg)"/>
<g clip-path="url(#headclip)">
  <!-- ear rims -->
  <path d="M925 340L1065 452 936 535Z" fill="#b39275"/>
  <path d="M1315 350L1175 458 1292 548Z" fill="#b39275"/>
  <!-- ear backs (fur side) -->
  <path d="M975 362L1060 450 1030 500 1010 430Z" fill="#a08a72" filter="url(#b2)"/>
  <path d="M1268 372L1180 455 1212 505 1235 430Z" fill="#a08a72" filter="url(#b2)"/>
  <!-- inner ears -->
  <g filter="url(#b2)">
  <path d="M953.8 356.3C957.8 355.2 961.8 359.6 966.0 362.0C970.2 364.4 972.8 364.4 978.9 370.6C985.0 376.8 996.0 390.1 1002.8 399.3C1009.6 408.5 1015.6 418.0 1019.5 425.6C1023.4 433.2 1026.2 438.9 1026.0 445.0C1025.8 451.1 1022.3 456.5 1018.0 462.0C1013.7 467.5 1006.9 472.7 1000.4 478.2C993.9 483.7 985.3 493.5 978.9 495.0C972.5 496.5 967.0 490.5 962.2 487.0C957.4 483.5 952.8 477.9 950.0 474.0C947.2 470.1 947.4 471.2 945.4 463.9C943.4 456.6 939.6 441.6 938.2 430.4C936.8 419.2 936.5 407.2 937.1 396.9C937.7 386.5 939.0 375.1 941.8 368.3C944.6 361.5 949.8 357.4 953.8 356.3Z" fill="url(#earg)"/>
  <path d="M1288.1 371.8C1284.3 371.5 1280.2 373.8 1276.0 376.0C1271.8 378.2 1268.3 379.5 1263.0 385.0C1257.7 390.5 1249.5 400.9 1243.9 408.9C1238.3 416.9 1233.3 425.6 1229.5 432.8C1225.7 440.0 1221.6 446.1 1221.0 452.0C1220.4 457.9 1223.0 463.3 1226.0 468.0C1229.0 472.7 1233.7 474.7 1239.1 480.0C1244.5 485.3 1252.7 496.7 1258.2 500.0C1263.7 503.3 1267.9 502.0 1272.0 500.0C1276.1 498.0 1279.7 492.4 1283.0 488.0C1286.3 483.6 1288.9 481.8 1291.7 473.4C1294.5 465.0 1298.2 449.6 1300.0 437.6C1301.8 425.7 1302.6 411.7 1302.4 401.7C1302.2 391.7 1301.3 382.8 1298.9 377.8C1296.5 372.8 1291.9 372.1 1288.1 371.8Z" fill="url(#earg)"/>
  <path d="M941 470q2 30 12 52l14-2q-14-22-14-44z" fill="#c79f8a"/>
  <path d="M1293 482q-2 26-14 52l-12-4q14-22 16-44z" fill="#c79f8a"/>
  <ellipse cx="962" cy="500" rx="12" ry="16" fill="#c9a797" transform="rotate(-25 962 500)"/>
  <ellipse cx="1270" cy="510" rx="12" ry="16" fill="#c9a797" transform="rotate(25 1270 510)"/>
  </g>
  <!-- ear hair strands -->
  <g stroke="#cdb9a2" stroke-width="2.6" fill="none" opacity=".9" filter="url(#b1)">
  <path d="M1045 470Q1000 450 965 425M1048 480Q1000 470 960 452M1048 492Q1005 490 965 478M1042 503Q1005 507 972 500M1036 455Q1003 430 975 400M1025 440Q1000 410 980 385"/>
  <path d="M1190 480Q1235 455 1272 430M1188 490Q1235 475 1276 455M1190 502Q1235 498 1274 484M1196 512Q1235 514 1266 506M1200 465Q1235 440 1266 408M1212 450Q1238 420 1262 392"/>
  </g>
  <g stroke="#8a7562" stroke-width="2" fill="none" opacity=".7" filter="url(#b1)">
  <path d="M1046 475Q1010 462 985 445M1046 486Q1012 482 985 470M1044 498Q1014 500 990 492"/>
  <path d="M1190 485Q1225 468 1250 450M1190 496Q1225 488 1252 474M1193 507Q1222 507 1248 498"/>
  </g>
  <!-- forehead darkness -->
  <ellipse cx="1116" cy="450" rx="46" ry="13" fill="#2a2020" opacity=".85" filter="url(#b4)"/>
  <ellipse cx="1115" cy="502" rx="22" ry="32" fill="#3a2e2a" opacity=".5" filter="url(#b4)"/>
  <!-- side-of-head mottling -->
  <g fill="#3b2f2a" opacity=".45" filter="url(#b4)">
  <ellipse cx="1040" cy="495" rx="26" ry="20"/><ellipse cx="1200" cy="505" rx="26" ry="18"/>
  <ellipse cx="986" cy="648" rx="24" ry="13"/><ellipse cx="1228" cy="660" rx="26" ry="13"/>
  <ellipse cx="956" cy="610" rx="8" ry="32"/><ellipse cx="1266" cy="612" rx="8" ry="36"/>
  </g>
  <!-- muzzle / nose bridge / chin -->
  <ellipse cx="1108" cy="596" rx="26" ry="36" fill="#c2a483" opacity=".9" filter="url(#b4)"/>
  <ellipse cx="1108" cy="630" rx="34" ry="20" fill="#866852" opacity=".85" filter="url(#b4)"/>
  <ellipse cx="1066" cy="672" rx="36" ry="20" fill="#d8c0a0" opacity=".95" filter="url(#b4)"/>
  <ellipse cx="1150" cy="672" rx="36" ry="20" fill="#d8c0a0" opacity=".95" filter="url(#b4)"/>
  <ellipse cx="1108" cy="714" rx="56" ry="19" fill="#f5f1eb" filter="url(#b4)"/>
  <!-- fur noise -->
  <g mask="url(#mTop)"><rect x="920" y="340" width="400" height="400" filter="url(#furV)" opacity=".6"/></g>
  <g mask="url(#mBot)"><rect x="920" y="340" width="400" height="400" filter="url(#furH)" opacity=".45"/></g>
  <rect x="920" y="340" width="400" height="400" filter="url(#furVl)" opacity=".45"/>
  <!-- soften ears after noise -->
  <g filter="url(#b2)" opacity=".82">
  <path d="M953.8 356.3C957.8 355.2 961.8 359.6 966.0 362.0C970.2 364.4 972.8 364.4 978.9 370.6C985.0 376.8 996.0 390.1 1002.8 399.3C1009.6 408.5 1015.6 418.0 1019.5 425.6C1023.4 433.2 1026.2 438.9 1026.0 445.0C1025.8 451.1 1022.3 456.5 1018.0 462.0C1013.7 467.5 1006.9 472.7 1000.4 478.2C993.9 483.7 985.3 493.5 978.9 495.0C972.5 496.5 967.0 490.5 962.2 487.0C957.4 483.5 952.8 477.9 950.0 474.0C947.2 470.1 947.4 471.2 945.4 463.9C943.4 456.6 939.6 441.6 938.2 430.4C936.8 419.2 936.5 407.2 937.1 396.9C937.7 386.5 939.0 375.1 941.8 368.3C944.6 361.5 949.8 357.4 953.8 356.3Z" fill="url(#earg)"/>
  <path d="M1288.1 371.8C1284.3 371.5 1280.2 373.8 1276.0 376.0C1271.8 378.2 1268.3 379.5 1263.0 385.0C1257.7 390.5 1249.5 400.9 1243.9 408.9C1238.3 416.9 1233.3 425.6 1229.5 432.8C1225.7 440.0 1221.6 446.1 1221.0 452.0C1220.4 457.9 1223.0 463.3 1226.0 468.0C1229.0 472.7 1233.7 474.7 1239.1 480.0C1244.5 485.3 1252.7 496.7 1258.2 500.0C1263.7 503.3 1267.9 502.0 1272.0 500.0C1276.1 498.0 1279.7 492.4 1283.0 488.0C1286.3 483.6 1288.9 481.8 1291.7 473.4C1294.5 465.0 1298.2 449.6 1300.0 437.6C1301.8 425.7 1302.6 411.7 1302.4 401.7C1302.2 391.7 1301.3 382.8 1298.9 377.8C1296.5 372.8 1291.9 372.1 1288.1 371.8Z" fill="url(#earg)"/>
  </g>
  <g filter="url(#b1)" opacity=".9">
  <path d="M939 466Q937 495 945 512Q951 525 960 529L968 521Q953 505 951 476Z" fill="#d0a891"/>
  <path d="M1296 468Q1293 492 1290 512Q1287 527 1278 540L1269 531Q1280 512 1284 480Z" fill="#d0a891"/>
  <path d="M951 478Q955 503 968 521" stroke="#a37e69" stroke-width="1.500" fill="none"/>
  <path d="M1284 482Q1280 510 1269 531" stroke="#a37e69" stroke-width="1.500" fill="none"/>
  </g>
  <g stroke="#e9ddd0" stroke-width="1.6" fill="none" opacity=".8">
  <path d="M1040 476Q1000 462 968 440M1040 488Q1003 484 966 468M1036 500Q1005 503 975 494M1030 462Q1003 440 980 412"/>
  <path d="M1196 486Q1235 466 1268 444M1196 497Q1235 488 1272 470M1200 508Q1232 508 1262 498M1206 470Q1235 448 1260 420"/>
  </g>
</g>
</g>
<g id="furstrokes" fill="none" stroke-width="1.35" stroke-linecap="round">
<path stroke="#1d1514" d="M1210 638l5.5 1.3M960 524l-4.7 -2.7M1140 612l4.1 0.9M1144 466l2.3 -5.7M1131 636l1.6 -4.5M1038 634l-6.5 -0.3M959 521l-4.3 -4.4M1233 538l3.8 -3.4M1118 634l-0.8 -2.6M1104 479l0.5 -7.0M1103 637l-0.7 -4.8M1015 531l-1.0 -5.2M966 628l-5.9 -2.3M1180 651l9.1 0.2M1103 628l-1.7 -3.4M1098 639l-0.2 -3.6M1079 474l-0.8 -7.9M1002 664l-8.7 3.5M1129 687l3.8 8.3M1095 671l0.7 7.6M1042 510l-1.0 -5.4M1226 653l7.0 -3.0M1218 663l8.5 1.5M954 596l-4.9 0.3M1124 453l3.7 -6.5M1144 527l-0.1 -6.4M1253 653l6.8 3.0M1196 656l6.2 1.5M968 632l-7.6 1.0M1237 664l8.4 -0.1M1259 610l7.7 -1.4M1102 499l0.5 -7.1M1125 588l-0.6 -3.2M1155 476l0.1 -6.0M1181 521l4.1 -6.8M1111 506l0.8 -7.5M1173 529l0.6 -5.4M1221 675l7.6 4.9M1042 515l-2.2 -6.2M1014 523l-1.1 -5.5M1163 484l-0.5 -6.2M1230 647l7.7 -1.5M1133 486l0.2 -6.4M1146 464l2.1 -6.9M1250 544l3.7 -6.5M1071 488l-1.6 -6.9M1003 644l-8.1 -1.3M1103 487l-0.5 -6.3M1139 528l-1.2 -5.7M1127 548l-1.5 -7.5M1201 646l5.3 1.7M1160 534l0.3 -5.2M1019 529l-1.2 -7.4M1097 531l0.3 -7.1M1201 648l5.9 2.1M980 531l-3.1 -3.2M1254 633l6.3 3.4M1240 644l5.0 -1.3M1168 672l5.6 4.7M1232 544l2.0 -3.6M1148 478l-0.4 -4.4M1233 648l5.6 -0.2M1085 461l0.6 -6.5M1140 633l6.2 0.5M1159 523l3.1 -5.8M1125 628l1.5 -4.6M1079 459l-0.6 -4.6M1180 519l2.8 -5.9M1223 674l7.0 3.7M1253 648l8.5 0.3M1157 488l1.6 -7.8M1177 518l-0.4 -6.6M955 627l-5.0 0.9M1190 638l4.7 3.9M1105 525l0.9 -6.8M1269 596l6.5 -1.2M1082 517l-0.6 -4.7M1120 530l0.8 -5.5M966 530l-2.9 -4.2M1262 636l6.1 -0.3M1083 531l-0.4 -6.8M1150 467l-1.1 -5.7M1115 623l0.2 -4.1M1118 450l-1.0 -5.9M1079 502l-0.1 -6.0M1062 522l-3.3 -5.5M984 655l-4.0 3.3M1105 491l1.4 -7.0M978 636l-5.4 2.8M1275 542l5.2 -2.7M1090 496l-1.6 -7.4M1170 480l0.7 -6.4M1170 667l7.4 5.7M1183 478l3.1 -6.3M1209 637l6.8 3.3M1210 673l5.8 3.3M963 531l-3.6 -5.4M1246 647l5.5 -0.0M1051 502l-0.9 -4.0M1108 483l-1.8 -6.0M1231 652l8.1 1.6M1146 527l2.1 -6.5M1213 644l7.8 2.5M1168 469l4.5 -5.4M1200 530l3.8 -4.3M1135 521l0.2 -5.3M1149 492l1.3 -4.2M1238 636l7.0 -1.5M1052 670l-9.1 2.5M1090 634l-2.1 -4.3M1053 503l-0.9 -7.2M1184 518l-0.5 -7.9M1189 530l4.3 -5.3M953 603l-6.6 -1.3M1244 547l6.8 -2.9M1119 474l-3.9 -7.0M1133 621l5.1 1.9M1163 539l3.6 -7.1M1183 518l1.6 -4.4M1163 656l4.0 3.7M1215 663l5.3 0.9M976 647l-8.7 -0.7M1181 488l3.0 -5.6M1142 452l1.0 -4.1M1232 635l4.3 0.9M1144 455l0.6 -5.6M1187 519l1.8 -6.1M1152 664l4.3 6.4M1021 528l-3.6 -4.2M1112 486l1.2 -6.3M1102 524l-2.2 -7.1M1091 486l2.8 -5.8M1255 665l5.2 1.1M1115 575l-1.5 -3.2M1166 521l1.1 -4.1M1081 500l-0.3 -5.7M1162 485l1.9 -5.2M1252 635l6.7 1.1M1153 471l1.9 -4.0M1093 534l-0.4 -5.0M1148 631l4.0 0.7M1054 642l-6.6 4.3M1056 477l-1.3 -7.3M1218 678l4.8 2.5M1004 651l-6.2 0.8M959 636l-6.7 -2.9M958 607l-5.8 0.3M1161 522l0.9 -4.5M1176 525l-0.1 -6.4M964 524l-1.9 -4.4M1239 648l5.1 2.0M1266 591l5.3 -1.9M976 653l-8.7 -0.7M1097 492l-1.4 -4.5M1207 653l5.9 0.4M1080 454l0.3 -8.0M1088 577l0.4 -4.9M1137 591l5.0 -2.9M1170 517l3.5 -7.2M1075 466l-0.4 -4.8M1108 590l0.3 -2.7M1080 481l0.7 -6.4M1167 455l1.3 -5.0M1180 529l1.8 -4.2M1178 521l-1.3 -5.7M1142 499l0.2 -4.6M1070 478l0.1 -5.3M1076 491l0.5 -7.2M1143 534l1.7 -6.7M1169 529l3.6 -2.6M1191 514l2.8 -5.9M1096 449l-0.1 -5.8M1210 667l6.7 2.0M1125 486l-0.5 -7.0M966 536l-1.5 -3.9M1079 481l1.7 -7.6M1102 475l-1.8 -4.3M1053 492l-1.1 -5.8M1070 630l-5.5 3.7M1122 483l-0.8 -7.4M1178 533l1.3 -3.8M1132 630l6.0 0.9M1063 484l-0.6 -4.8M989 639l-6.4 1.3M1114 624l0.6 -4.4M1103 451l1.1 -7.2M1142 490l2.5 -3.9M1155 471l0.1 -7.7M1072 482l-2.4 -5.5M1265 586l7.6 0.1M1190 533l0.7 -5.3M1133 529l-0.4 -5.9M1121 582l-0.9 -3.5M1131 626l-0.7 -3.6M1133 502l-0.6 -4.5M1047 629l-6.8 1.3M1115 492l1.7 -5.1M1115 498l-0.3 -4.5M1085 491l-4.2 -6.0M1178 453l2.6 -3.2M1244 543l2.0 -5.8M1097 633l1.0 -4.8M1124 517l0.1 -7.8M1131 531l-0.2 -7.4M1024 523l-2.3 -4.4M1070 513l-4.3 -6.6M1068 533l-1.1 -4.8M1094 480l-0.9 -4.1M1120 457l0.3 -5.0M1140 535l3.4 -5.2M1166 536l3.5 -6.0M1252 646l7.0 0.0M1110 684l1.3 6.7M1100 684l-2.6 9.2M1004 666l-6.6 2.2M1018 695l-4.0 3.7M1118 459l-0.1 -4.3M1062 494l0.7 -4.8M1194 498l2.4 -4.1M1113 528l-0.4 -5.5M1153 490l-0.2 -5.8M1079 602l-3.3 -2.3M1154 511l1.6 -7.2M950 610l-5.9 0.5M1079 501l-0.9 -6.0M1106 496l-1.4 -5.5M1036 532l-2.8 -6.6M1076 523l-1.2 -7.4M1087 525l-1.2 -5.7M952 618l-4.5 0.7M1073 476l-2.7 -6.5M1177 453l2.9 -3.7M1223 690l6.0 4.4M1094 569l-1.4 -3.3M1160 458l1.6 -5.1M1048 703l-4.9 4.1M1080 484l-1.5 -7.6M1078 466l-1.4 -5.2M1098 515l-1.5 -6.8M1133 537l1.2 -6.6M1169 461l2.9 -6.5M1055 522l-0.5 -4.0M1164 517l1.4 -6.4M973 624l-5.6 2.6M1009 523l-3.2 -3.9M950 594l-5.5 -0.2M1087 625l0.1 -2.7M1261 633l4.5 0.7M996 526l-2.9 -2.8M1173 712l5.1 4.7M1241 661l4.4 3.5M1016 521l-3.4 -6.2M1128 496l4.1 -6.3M1218 656l8.1 -1.5M1014 522l-3.5 -4.8M1135 515l3.6 -7.1M1230 532l1.8 -5.0M1118 470l-0.9 -7.8M1195 513l2.0 -5.0M1165 523l3.4 -7.2M1174 539l2.6 -7.5M1085 499l0.4 -5.5M1044 697l-5.9 7.2M1088 496l-2.5 -7.6M953 607l-4.3 -0.4M1132 448l-1.4 -4.1M1160 455l2.7 -6.3M1073 466l0.5 -5.2M1110 620l-0.9 -3.3M1111 521l-1.0 -4.1M957 615l-6.7 2.0M1095 451l0.7 -7.6M1153 690l7.1 5.7M1217 665l5.1 3.2M1059 514l-2.0 -4.8M1265 543l3.8 -2.9M1130 485l0.5 -7.0M1219 673l6.6 3.3M1066 532l0.5 -7.3M1060 500l-3.2 -7.0M1114 632l-0.1 -4.9M1209 527l2.0 -7.3M1000 659l-5.2 1.5M1110 635l-0.5 -3.2M1084 475l-1.8 -3.7M1084 639l-4.9 3.1M989 652l-9.3 3.2M1062 533l-0.9 -4.9M1074 489l0.3 -4.6M1022 638l-6.2 -0.1M1007 673l-4.7 2.4M1041 530l-0.6 -6.4M1098 608l0.1 -3.2M1169 534l1.1 -5.8M1132 477l-0.3 -4.5M1106 617l0.5 -4.6M1123 501l1.1 -6.2M1071 533l-1.3 -7.7M1268 604l4.6 -1.2M1113 484l-0.7 -7.6M1083 527l-4.0 -6.1M1096 491l-1.6 -5.3M1138 511l1.8 -5.6M1194 536l5.5 -3.1M1039 524l-3.7 -6.1M1266 631l6.1 0.4M1197 669l6.1 3.2M1167 532l2.3 -3.6M1085 462l1.7 -7.4M973 652l-4.5 2.5M1160 694l3.2 6.5M973 621l-5.6 -1.1M1250 645l5.8 0.1M1182 521l3.5 -6.1M1115 463l1.1 -7.7M1054 518l-3.8 -4.4M1104 453l-2.9 -5.8M1246 660l4.5 2.3M1100 611l-0.3 -3.9M1126 480l1.5 -6.8M1224 666l4.7 3.2M1119 489l-0.5 -4.4M1132 460l-0.8 -4.2M1077 472l-1.8 -6.6M1192 527l1.1 -6.9M1239 650l8.7 0.4M1267 598l7.9 0.7M1148 513l2.0 -6.0M1152 470l2.4 -6.4M1088 452l-1.1 -7.2M1189 509l1.7 -3.9M1117 526l1.2 -5.2M1103 537l0.6 -7.7M978 520l-3.3 -4.7M1053 527l-1.4 -5.9M1101 627l1.1 -4.8M1065 481l-1.9 -7.5M1092 632l0.4 -4.8M1068 644l-4.9 3.2M1110 545l0.1 -4.5M1152 493l0.8 -5.4M1109 451l1.3 -6.5M1049 518l-2.8 -7.1M1240 655l8.3 -0.6M981 652l-10.0 0.0M955 613l-7.6 -0.9M969 656l-6.5 2.1M1069 460l-3.4 -5.2M1113 518l0.3 -6.8M1062 509l0.6 -6.3M1079 622l-6.7 0.4M1110 458l1.0 -4.5M1268 616l6.9 1.9M1129 523l0.6 -6.1M1115 479l-0.9 -5.4M1121 533l1.9 -5.8M1266 594l4.4 -1.9M1174 505l3.7 -4.2M1073 538l-1.5 -7.7M1268 584l4.3 0.8M1161 520l2.3 -3.6M1034 524l0.6 -4.9M1145 471l-0.1 -4.5M1133 458l-2.2 -6.1M1136 633l3.9 2.2M1142 490l1.4 -4.7M1088 563l-0.8 -3.9M962 610l-4.8 -2.2M1160 506l2.1 -5.2M1096 454l-0.5 -6.3M1190 505l1.1 -4.3M1055 516l-1.4 -7.6M1070 540l-0.9 -5.5M982 636l-4.7 -1.5M1195 540l2.1 -6.9M1089 531l-1.2 -7.8M1160 467l3.3 -7.0M978 633l-6.5 2.1"/>
<path stroke="#c4a98a" d="M1143 650l5.9 3.9M1098 694l-1.3 5.1M1093 606l2.2 -3.8M1186 693l3.3 3.9M1087 492l0.5 -5.4M1135 675l1.3 6.7M1128 573l0.7 -2.5M1039 684l-5.1 2.5M1001 636l-7.4 2.6M1007 673l-6.7 1.8M1173 673l4.7 5.9M1146 617l6.7 0.7M1081 630l-6.5 2.5M1080 674l-1.7 5.8M1011 684l-4.8 2.8M1118 716l1.7 9.5M1074 505l-1.4 -4.5M965 653l-6.2 1.5M1140 668l4.8 4.1M1145 690l5.6 6.7M1099 664l-2.4 7.4M1197 679l6.2 0.6M1153 540l2.6 -6.8M1143 631l6.8 0.6M1040 669l-8.1 3.5M1215 644l7.4 2.8M1118 533l-0.1 -4.5M1176 670l5.8 2.1M978 670l-4.8 1.8M1255 602l4.3 -0.8M1071 624l-6.5 1.2M1261 562l6.3 -0.8M1116 664l-0.3 7.0M1133 654l4.9 8.1M1095 641l-2.6 1.3M1200 673l7.9 1.8M1254 544l3.3 -5.8M1129 645l1.9 3.7M1012 683l-4.8 2.2M955 636l-7.1 0.6M1005 655l-8.1 3.0M1128 548l-0.7 -4.8M1130 563l0.2 -4.6M1126 651l4.1 6.7M1102 645l-1.7 2.4M957 577l-4.6 -1.1M1050 667l-7.4 1.6M1214 690l7.5 3.2M1054 645l-9.7 1.9M1178 495l1.7 -6.2M1102 683l-4.3 9.0M1063 677l-3.5 7.4M1079 645l-5.6 7.0M1112 689l0.8 7.5M1086 593l1.1 -3.2M1028 679l-5.2 3.0M985 666l-8.0 1.9M1113 606l-1.3 -3.1M1004 674l-8.9 4.1M951 545l-4.4 -4.7M1095 502l2.9 -7.1M1132 579l-1.1 -4.4M1168 646l7.7 2.6M1121 562l-1.5 -3.1M1109 595l0.7 -3.3M1015 673l-4.5 4.7M960 643l-5.4 -0.2M1062 484l-1.2 -5.9M1117 575l-0.3 -3.8M1023 683l-7.3 2.9M1267 555l7.3 -1.1M1068 650l-4.7 2.0M1192 672l8.6 4.6M1194 664l5.5 2.3M1109 542l-1.9 -6.9M1053 655l-8.0 5.6M1125 653l4.9 8.2M1160 467l4.8 -5.3M1243 544l3.4 -2.8M1088 485l0.3 -6.0M1083 621l-5.4 1.7M1148 627l6.8 1.2M954 555l-7.0 -3.0M1088 490l-1.6 -5.3M1195 652l7.3 2.7M1175 663l9.8 -1.4M1124 582l-0.6 -4.8M1074 519l-2.0 -5.6M1261 556l7.0 -2.3M1256 653l8.8 -2.0M1000 679l-9.0 1.4M1033 672l-6.2 0.6M1130 653l2.7 4.3M980 666l-8.1 5.3M1076 542l-1.0 -5.0M1139 597l4.7 -3.7M1200 513l1.3 -4.7M1085 658l-6.4 4.6M990 532l-2.1 -3.4M963 653l-8.3 -3.6M1138 682l4.2 8.3M1000 681l-6.7 3.8M1066 692l-5.5 3.8M1188 503l2.2 -5.7M1110 541l-3.2 -5.6M1091 651l-4.0 6.1M1178 667l7.0 5.9M1097 575l0.1 -3.7M1188 692l6.9 5.1M1123 470l1.1 -6.2M1018 530l-0.7 -5.7M1274 542l2.9 -4.8M1170 657l6.5 5.9M1155 637l4.7 0.7M1054 634l-4.4 1.0M1074 669l-6.1 2.9M1204 691l3.8 3.4M1116 578l0.3 -4.4M1043 681l-3.6 3.6M1162 654l7.6 2.4M957 561l-4.3 -1.2M1097 683l-4.8 7.7M1097 495l-0.2 -4.5M1256 542l5.1 -2.6M1073 615l-4.1 0.3M1030 670l-4.7 2.8M1185 498l2.4 -4.7M1068 696l-3.4 8.5M1119 566l-0.2 -2.9M1077 606l-5.4 -5.1M1098 588l2.3 -4.1M1061 655l-5.7 6.7M1104 715l-4.2 7.0M1119 684l3.4 9.3M1119 674l-0.0 8.5M1175 662l7.1 5.3M1034 650l-9.7 1.6M1092 606l1.5 -2.6M1136 545l0.3 -7.0M1067 665l-9.1 4.1M1128 642l1.8 2.8M994 630l-5.9 -2.2M1255 608l6.0 2.5M958 640l-4.5 -0.5M1036 523l-3.4 -5.3M1122 663l3.4 6.7M1072 652l-8.1 1.9M1113 563l-0.5 -2.9M1021 674l-5.4 5.3M1205 683l9.1 3.1M1154 651l7.7 3.5M1100 579l-2.6 -4.1M1270 544l5.4 -3.6M1188 683l4.6 3.2M1069 701l-5.2 5.2M978 617l-6.3 -1.5M1091 543l-1.0 -5.1M1048 535l-0.9 -6.3M1038 703l-6.1 4.8M1056 505l-2.2 -7.4M1074 653l-3.0 6.4M1016 680l-4.5 2.7M1106 678l1.7 7.2M1058 460l-0.9 -6.2M1106 601l-0.4 -4.3M1047 692l-4.7 2.2M1095 667l-3.4 5.0M1208 699l5.5 2.1M1074 618l-7.0 -0.5M1125 701l5.4 6.8M1079 714l-5.9 4.7M1259 584l4.5 -0.1M1145 682l4.0 7.7M1104 590l0.1 -3.5M1066 482l0.9 -5.6M1172 520l3.0 -6.9M1250 620l6.6 1.1M1194 682l7.7 4.3M1160 634l4.0 0.1M1033 685l-6.0 5.0M1029 662l-8.6 3.6M1102 702l-6.0 7.8M1079 676l-2.1 4.9M1169 671l5.7 6.1M1084 695l-3.3 8.6M1091 682l-2.6 7.8M1021 660l-7.8 4.0M1250 547l4.7 -2.1M990 663l-7.8 0.9M1153 515l3.9 -5.8M1122 599l-0.0 -5.0M1049 697l-3.5 4.5M1076 614l-6.0 -1.8M1133 682l2.2 5.9M1180 705l7.3 6.4M1075 677l-5.7 5.8M1106 584l-1.2 -3.2M1043 631l-6.5 -1.2M1054 637l-6.2 2.5M1018 653l-7.0 1.1M1108 667l-1.8 9.8M1146 618l4.1 1.1M1168 669l4.1 4.5M1095 670l-0.1 5.8M1223 639l6.8 1.0M1130 599l0.1 -3.3M1007 676l-7.3 2.5M1125 559l-0.8 -4.6M1083 688l-5.8 7.9M1170 636l5.5 4.2M1077 632l-6.8 2.0M1098 537l1.6 -4.0M1155 651l7.8 6.3M1268 560l6.5 -2.6M1129 563l-0.1 -4.4M968 654l-7.5 -2.4M1078 646l-6.1 3.5M997 632l-4.0 0.5M1125 669l3.5 9.2M965 653l-5.6 2.5M969 522l-3.6 -6.5M1116 582l-0.0 -3.0M1099 670l-1.3 6.3M1072 694l-2.6 5.4M1070 695l-5.8 7.7M1150 649l4.7 3.7M1173 665l8.0 5.5M1201 685l3.9 3.2M1156 506l-0.3 -6.9M1110 558l1.6 -7.3M1100 686l0.1 8.2M1190 642l9.5 1.3M1172 699l4.8 4.5M1083 684l-3.1 4.1M1156 634l4.8 2.8M1036 691l-6.3 7.7M1071 639l-3.7 2.3M969 618l-7.3 1.2M1094 660l-1.4 8.8M1257 637l5.8 -0.9M1222 693l6.6 2.4M1157 627l7.5 0.4M1202 638l4.3 0.4M1119 683l1.7 6.3M1156 505l1.0 -6.9M1257 622l6.3 -1.4M1044 654l-5.5 2.4M1053 693l-5.5 5.7M1126 576l-0.7 -3.0M1156 678l5.5 8.0M1182 654l3.7 4.5M1166 695l5.1 4.7M1112 687l-0.5 6.7M1144 628l4.3 1.7M1060 631l-5.7 2.0M967 641l-7.5 6.0M1079 665l-6.1 5.1M1142 544l2.3 -4.5M1043 683l-6.2 4.4M1262 561l6.4 -3.8M981 625l-7.0 -0.5M1125 668l0.5 8.6M1193 703l5.5 2.8M1138 604l5.6 -4.5M1073 659l-5.6 5.0M1186 678l7.1 3.4M1057 464l-1.8 -3.9M1105 559l-2.0 -5.8M1124 663l0.6 7.1M1189 654l8.8 3.4M1079 674l-3.9 6.7M1121 713l-0.5 5.2M1240 538l2.2 -5.3M1026 659l-8.3 2.0M1145 541l1.2 -6.6M1092 595l0.1 -3.9M1016 681l-5.7 1.2M998 671l-4.9 1.4M1129 554l0.5 -7.3M1139 633l7.6 0.9M1267 566l4.6 -0.1M1153 696l3.0 6.1M1145 548l3.1 -6.4M1168 506l1.0 -5.2M1249 669l7.8 1.3M1209 646l9.3 1.4M1056 469l0.4 -5.2M1101 687l0.5 6.9M1180 672l6.3 4.1M1182 674l7.8 4.4M1085 549l-1.1 -3.9M1082 663l-3.8 8.8M1139 605l6.8 -2.5M1081 609l-7.1 -2.2M1098 531l-1.6 -7.3M1111 567l-0.0 -2.7M1202 654l8.3 3.5M1151 671l3.7 6.5M1116 526l1.7 -7.7M1075 683l-6.4 5.8M1100 674l-2.6 7.3M1265 548l5.8 -3.1M1026 679l-6.0 3.2M1164 479l0.3 -7.3M1056 693l-5.5 4.0M1272 537l3.4 -2.4M1062 658l-5.8 3.2M1008 656l-5.6 3.2M1186 651l7.2 4.2M949 542l-2.4 -3.8"/>
<path stroke="#2a1f1b" d="M1091 519l-0.1 -4.4M1161 487l-0.6 -6.9M1152 544l3.8 -7.0M1149 509l-0.2 -4.4M1207 675l4.9 3.0M961 633l-6.1 -1.5M1081 519l0.6 -4.2M1207 530l1.4 -5.4M957 635l-7.3 1.3M1045 499l-4.9 -5.2M1076 482l0.1 -4.9M1052 509l-2.5 -7.3M1067 526l-1.0 -4.1M1211 679l6.6 1.1M1150 500l0.4 -4.4M1115 568l1.3 -4.2M1258 624l4.6 0.2M1170 674l6.6 3.2M966 636l-6.0 -0.6M1073 485l-0.0 -7.2M1059 479l-3.1 -6.8M1264 585l4.4 0.2M1049 488l-2.0 -7.4M1056 655l-7.2 4.8M963 636l-5.3 0.3M1222 665l7.9 2.4M1235 652l6.1 2.6M1147 509l1.8 -5.9M1145 517l-0.1 -7.7M1211 531l2.4 -3.7M1064 464l-1.1 -6.3M983 526l-4.6 -3.8M1035 526l-2.6 -7.3M1156 494l0.0 -4.4M1185 530l0.5 -4.9M983 530l-3.0 -5.0M1136 626l6.8 0.5M1155 455l0.8 -5.1M982 666l-6.4 1.4M1125 638l-0.5 -5.0M1165 509l1.2 -6.1M1117 549l-0.4 -6.2M1226 671l7.9 5.2M1110 482l1.4 -6.6M1176 534l3.4 -3.7M1083 506l-2.9 -5.0M1263 562l4.0 -0.7M985 636l-4.6 0.0M1185 511l0.1 -4.8M994 530l-3.1 -5.8M981 655l-6.2 4.0M959 628l-4.2 2.3M1187 505l0.9 -6.0M999 659l-6.1 1.0M1266 621l5.5 0.1M1214 665l8.0 2.6M1058 483l-0.1 -5.4M1151 506l0.4 -7.2M1069 493l-2.7 -6.5M950 632l-4.0 0.4M1157 505l-0.6 -4.1M1108 630l0.3 -2.9M1018 523l-1.3 -4.6M1191 538l1.4 -3.9M1107 459l-2.2 -7.2M1114 474l0.3 -4.3M1206 668l4.0 3.0M954 598l-5.2 -0.8M1140 449l1.7 -4.9M1151 480l1.4 -5.7M1265 624l6.0 -0.7M1205 670l4.3 4.9M1133 507l2.2 -5.4M1243 645l9.1 -0.4M1109 485l-0.9 -7.5M1233 658l6.3 -0.2M1234 656l5.4 4.2M1130 630l0.2 -3.7M1113 488l1.1 -7.1M1045 499l-0.5 -4.2M1066 483l-0.0 -4.1M1115 673l-1.1 7.9M1141 520l1.5 -5.5M1091 458l-0.0 -5.0M954 623l-4.0 -0.8M1165 664l4.9 1.9M1127 490l1.2 -6.7M1125 537l-0.7 -5.8M1008 523l-3.7 -4.0M1194 535l2.6 -6.0M1210 662l5.0 1.7M1025 521l-1.0 -5.7M1156 482l1.1 -5.7M1026 526l-0.6 -5.5M1010 661l-7.9 3.3M1256 549l4.7 -0.1M1133 478l0.6 -5.9M1263 612l7.2 0.9M1111 474l1.2 -4.5M1146 516l1.4 -7.5M1149 461l0.5 -7.2M1100 486l2.1 -7.3M962 590l-4.4 -1.3M1067 696l-5.6 1.9M1057 469l-3.0 -6.4M1237 661l6.1 1.0M1238 649l5.6 1.2M1111 631l1.1 -3.3M1055 531l-0.2 -6.8M1120 531l0.6 -5.0M1086 584l-1.0 -4.7M1123 516l-2.1 -6.3M1212 531l3.3 -4.6M1153 486l-1.6 -4.5M1086 617l1.3 -3.2M1105 475l0.2 -6.1M1120 641l2.6 3.2M1177 536l1.7 -4.0M1090 455l-1.4 -7.3M1097 623l0.8 -3.7M1150 460l3.1 -7.2M1094 519l0.9 -7.5M1168 510l-0.5 -4.9M956 603l-5.6 -0.6M1263 636l6.2 -1.4M1017 667l-5.7 2.8M1217 674l5.9 3.0M1142 504l-1.0 -5.0M1109 526l0.0 -7.0M1247 649l7.7 1.1M952 607l-5.4 -2.3M1214 657l6.8 0.9M983 530l-4.3 -6.2M1245 664l7.9 0.6M967 628l-5.6 -2.1M1048 503l-2.7 -6.6M1085 517l-1.4 -6.4M1230 669l8.3 4.9M1202 524l0.2 -5.5M1050 505l-0.7 -4.8M1088 499l-1.7 -4.0M1139 524l1.2 -7.4M1243 665l8.0 4.0M1055 523l-1.9 -5.5M1241 539l4.8 -6.2M967 640l-6.8 1.1M1163 537l2.1 -5.4M1087 519l2.8 -7.1M1045 496l-3.5 -5.8M1261 621l7.4 1.4M1040 506l-5.2 -5.8M1117 616l2.0 -4.5M1078 494l-0.7 -5.4M1081 482l1.0 -6.4M1124 484l0.4 -4.8M1159 485l2.9 -5.2M1122 468l-2.4 -3.9M1143 647l6.0 6.5M1156 504l1.9 -4.6M1081 479l1.5 -7.5M1080 449l-1.6 -4.5M955 576l-4.5 -3.9M1238 538l3.7 -5.9M1232 645l5.0 1.1M1222 655l9.5 2.4M1237 668l3.4 4.7M1224 660l5.0 6.6M1072 537l0.6 -7.0M1200 696l4.4 5.2M1084 468l1.1 -7.5M1100 480l-3.0 -5.9M990 670l-5.9 0.9M1083 455l-1.4 -7.7M1001 655l-6.0 2.0M1145 477l1.1 -5.5M1153 472l0.8 -5.1M1135 461l1.4 -5.9M1207 677l3.9 3.8M1159 480l0.0 -5.0M1151 455l0.9 -7.7M1000 669l-5.5 3.4M1131 619l-0.2 -4.6M1078 453l1.8 -6.7M985 633l-4.6 -0.6M1055 484l0.3 -6.6M1176 521l0.3 -5.8M1001 664l-9.0 3.6M1252 644l8.9 0.7M1093 535l1.4 -7.4M1101 627l-1.4 -2.5M1175 488l2.5 -5.3M1229 654l8.5 4.9M1092 534l-1.8 -7.2M979 644l-4.5 2.4M1142 519l1.5 -4.4M1236 656l4.9 3.7M1102 510l-0.9 -4.2M1117 503l1.4 -5.6M1252 635l4.2 -0.3M1151 470l-0.3 -6.2M1195 504l2.2 -3.5M950 594l-4.3 -2.4M979 637l-6.4 2.1M1221 655l9.6 -2.6M1141 549l2.5 -3.9M1146 467l4.7 -4.6M1193 507l2.7 -5.1M1105 573l0.5 -4.2M1095 587l-1.3 -3.7M952 581l-6.0 0.6M1136 536l0.6 -7.0M1265 620l4.7 -0.3M1079 502l-0.0 -4.5M1106 575l0.1 -4.0M1005 528l-2.9 -5.6M1082 479l-0.6 -5.5M1251 630l6.5 -1.5M1270 616l4.7 -0.6M1050 502l-1.2 -5.4M1041 502l-0.2 -6.8M1147 475l2.7 -6.2M1185 477l2.5 -5.3M1167 506l1.5 -4.3M1148 468l0.8 -4.0M1215 530l2.2 -7.3M998 531l-0.2 -7.1M1092 633l0.8 -3.4M952 528l-5.4 -5.0M1006 656l-6.0 0.8M1133 510l-0.1 -6.8M1099 624l0.9 -4.9M1247 658l5.7 2.4M1065 497l1.3 -5.4M1170 497l0.2 -4.2M1062 532l-1.7 -4.4M1064 488l-1.7 -5.9M1008 663l-7.2 0.1M1057 532l-2.4 -7.1M1146 488l-2.0 -7.5M1270 619l5.8 -0.2M1179 487l1.4 -4.2M1081 479l1.0 -4.6M1090 623l-0.7 -3.0M1184 532l4.2 -6.0M1224 653l7.5 1.7M953 616l-4.9 0.1M1168 457l-0.4 -4.3M1179 519l2.7 -6.9M1140 689l4.1 7.2M1084 525l1.3 -4.4M1140 532l0.8 -4.5M1088 511l-0.1 -4.0M1155 506l0.9 -4.1M1113 468l0.3 -4.3M1104 512l-0.7 -7.4M1113 505l-3.1 -6.8M1193 511l4.3 -4.2M1071 496l-0.9 -6.4M1254 644l7.3 0.8M1186 497l3.4 -6.7M996 645l-5.8 0.2M1066 524l-0.6 -6.1M1120 537l-0.6 -7.5M1111 459l-0.2 -6.7M1037 668l-5.7 4.2M1064 502l-1.5 -6.8M1230 669l5.0 0.8M1263 588l6.9 -0.2M1088 458l-3.6 -5.2M1002 665l-5.0 -1.2M1178 504l3.7 -6.8M1177 692l4.9 2.8M990 645l-9.2 2.3M1180 469l3.1 -5.9M1154 477l0.4 -7.8M1195 500l2.7 -7.5M957 613l-7.1 -1.5M1105 620l1.2 -4.8M995 677l-6.5 1.8M1148 524l5.0 -5.3M1168 512l0.7 -4.9M1091 502l-2.0 -6.7M1163 534l2.2 -6.1M976 524l-5.0 -5.1M973 644l-7.6 -0.1M1047 503l-0.9 -4.6M1179 523l3.5 -4.7M1174 472l1.9 -6.6M1084 512l-0.4 -5.4M981 631l-5.5 1.1M1109 486l-0.0 -6.0M1106 508l1.2 -7.3M999 676l-5.9 1.8M1050 520l-1.4 -7.7M1166 537l0.7 -7.7M1095 491l0.6 -4.3M1120 526l0.5 -4.0M1126 521l1.3 -5.9M969 633l-5.7 -0.1M1057 469l-1.3 -5.5M1126 531l0.4 -7.4M1069 508l-1.5 -6.9M1060 483l-2.0 -7.0M1019 522l-3.0 -6.1M1145 468l0.5 -5.3M1239 671l7.2 4.0M1117 498l-2.2 -6.2M980 644l-5.1 -2.9M1077 472l1.2 -7.0M1124 647l0.9 2.8M1161 467l0.7 -4.8M1124 580l1.0 -4.8M1010 675l-9.2 1.6M1144 551l2.3 -6.1M1079 684l-2.1 8.4M1189 508l1.3 -5.8M1088 451l-0.2 -4.8M1100 502l0.6 -5.1M1090 542l-0.9 -4.7M1211 674l6.0 1.7M1221 655l4.3 4.6M1256 615l4.4 3.0M1152 535l-0.3 -4.8M1158 483l-0.4 -5.1M1093 533l0.8 -4.4M1091 536l0.8 -5.0M1173 488l1.9 -4.7M1063 669l-3.6 3.8M1106 473l0.2 -4.5M1215 671l6.5 3.6M1078 494l-3.2 -4.5M961 581l-4.0 -0.7M1096 454l-1.8 -5.3M1245 653l8.8 0.6M1267 602l5.1 0.2M1154 475l1.2 -4.3M1119 477l2.1 -7.2M995 661l-8.2 0.1M1089 451l0.3 -4.1M971 649l-6.5 1.2M1126 561l-1.1 -3.6M985 635l-4.6 -0.2M1170 507l1.5 -5.8M989 669l-5.8 2.3M1037 527l-1.2 -3.9M988 639l-6.5 0.4M1213 673l5.5 3.5M1130 457l-1.7 -4.5M1084 535l-1.1 -5.2M1037 523l-1.9 -5.8M1032 524l-5.6 -5.4M1163 630l5.8 0.6M1107 624l-0.5 -3.4M1076 627l-6.5 3.3M956 607l-4.8 -1.0M962 626l-4.9 0.3M1046 535l-4.7 -3.2M1267 611l6.6 2.0M1026 675l-7.3 5.7M1194 513l0.3 -7.3M1167 457l1.3 -6.3M981 648l-5.6 0.2M1152 454l0.9 -4.0M1161 512l2.6 -4.2M1265 598l7.3 -1.8M1132 446l0.1 -5.8M969 660l-5.6 1.7M1214 670l7.2 4.7M1263 638l6.5 -0.9M1002 659l-6.1 4.1M1149 471l0.8 -7.7M1139 485l2.0 -7.6M1242 668l6.7 1.7M1193 529l2.3 -7.2M1217 653l7.0 0.7M1213 666l8.9 -0.7M1125 515l2.8 -6.1M1127 620l0.5 -3.4M1140 535l2.2 -7.6M1064 482l-0.3 -5.0M1162 536l0.8 -6.1M1097 483l0.3 -5.1M1217 539l3.1 -5.6M1114 595l-0.9 -3.9M1103 497l-1.9 -5.9M1132 516l2.3 -4.3M1264 621l6.3 -1.5M1075 501l1.0 -4.6M985 639l-6.8 2.0M1206 684l6.7 2.9M1124 477l0.3 -5.2M1153 679l5.4 5.0M1117 639l-0.1 -3.0M1194 496l4.6 -4.7M954 595l-4.7 -1.2M1103 530l-1.0 -3.9M1038 668l-7.5 4.6M1182 691l8.6 3.5M1154 476l0.9 -7.8M1174 500l3.3 -5.6M1199 651l10.0 0.6M1100 476l-0.6 -5.0M1086 456l0.9 -4.1M1041 496l-2.5 -7.4M1083 529l-1.4 -6.4M1103 478l-1.2 -3.9M961 561l-7.5 -2.2M948 521l-3.2 -2.5M1158 498l3.0 -5.1M1146 494l0.1 -6.7M1100 622l-0.4 -2.7M1210 676l5.1 0.4M1067 506l-0.8 -6.9M1194 523l2.7 -7.2M1096 535l0.5 -5.3M1146 467l1.9 -6.2M1118 530l1.9 -7.1M951 611l-7.3 2.5M1110 628l0.7 -3.3M1175 535l3.2 -3.5M1062 508l-2.9 -6.2M1083 641l-5.7 0.7M1094 641l-2.7 3.0M1090 456l1.3 -7.6M1068 501l-1.1 -7.6M1172 641l7.6 1.6M1131 513l1.4 -7.5M1146 470l1.6 -7.2M1266 635l6.2 0.9M1183 494l1.0 -7.0M1103 486l-2.6 -7.4M1033 523l-0.6 -4.6M1176 521l0.3 -5.1M1073 510l-0.4 -4.3M1123 522l0.4 -6.8M1193 492l2.3 -7.4M1048 632l-3.9 1.3M1123 498l-0.3 -5.5M1135 535l0.3 -4.3M1211 529l3.1 -6.7M1130 607l0.6 -4.3M1115 497l1.6 -6.1M1042 511l-0.8 -4.8M1129 479l1.2 -4.7"/>
<path stroke="#e2d0b6" d="M1252 617l6.8 2.5M1091 576l0.2 -4.2M1128 677l5.1 8.3M1216 687l7.9 4.0M1136 560l4.4 -6.2M1111 718l-1.2 6.8M1135 656l3.4 5.4M1260 583l7.2 -2.2M1097 576l-0.3 -3.8M1127 568l-0.6 -4.5M1206 686l7.0 1.6M1025 662l-5.1 2.0M1257 653l9.6 2.3M1185 658l6.7 2.4M1091 668l-3.3 7.5M1098 561l0.8 -2.9M1143 715l3.4 6.9M1125 573l-0.9 -3.5M1044 491l-2.3 -4.3M1028 682l-5.6 1.5M1087 688l-2.9 6.9M1159 644l4.4 4.0M1144 629l6.6 -0.2M961 635l-6.4 0.9M1191 693l4.0 3.7M956 575l-5.0 -1.1M1174 674l6.8 7.3M1091 549l-0.6 -5.8M1154 505l0.6 -4.8M1128 547l1.3 -4.8M1123 671l2.1 7.8M1148 644l6.4 6.0M1149 630l5.0 2.2M960 539l-3.0 -4.3M1026 658l-4.7 3.8M1151 643l5.3 2.3M1175 540l-0.1 -7.6M967 653l-5.9 2.1M1111 659l1.8 7.0M1166 480l1.9 -5.0M1260 582l5.3 0.1M1193 707l3.9 4.0M1099 542l-0.9 -7.0M1054 630l-7.2 -0.1M1060 644l-8.3 2.2M1074 647l-4.9 2.9M1075 530l-2.9 -3.3M1266 567l4.0 -0.9M1034 663l-5.8 2.1M1261 548l4.4 -2.1M1086 538l-1.5 -6.2M1098 547l0.6 -6.6M1135 485l2.2 -4.7M1123 630l-0.6 -4.3M1181 669l5.4 3.8M1181 641l7.3 1.2M1150 613l4.7 -2.0M1010 674l-6.2 3.7M1168 707l3.3 5.0M992 669l-8.0 3.6M1125 582l-0.8 -3.6M1095 563l0.6 -3.0M1111 643l-0.9 3.9M1153 641l5.3 5.1M1057 477l-0.7 -5.6M960 638l-6.7 2.4M1023 647l-7.0 1.9M952 553l-4.2 -3.2M1111 706l1.5 6.9M1034 689l-6.9 7.0M1118 591l1.6 -4.5M1239 538l4.8 -3.1M1146 675l4.0 6.8M1089 658l-1.5 9.2M1054 660l-3.3 4.2M1258 580l5.5 -0.0M1073 651l-6.0 3.4M1135 574l2.6 -3.8M1180 471l2.7 -6.9M1118 640l0.3 -4.4M1099 465l1.1 -7.7M1002 680l-4.1 3.5M969 525l-4.1 -2.0M1150 643l4.5 2.2M1165 501l2.5 -5.7M1228 537l1.6 -5.5M1075 716l-1.3 5.1M1121 677l4.1 7.9M1087 570l0.8 -4.1M1072 622l-7.6 0.5M1192 694l5.7 6.4M1149 691l1.9 4.9M1111 670l-0.2 5.1M1189 657l5.1 1.3M1097 520l-1.4 -7.4M1032 645l-4.0 3.4M1018 658l-5.5 1.6M1058 684l-3.4 3.8M1216 677l6.9 6.9M1037 640l-9.1 4.1M1174 698l4.4 5.0M1121 608l-1.0 -4.5M1089 606l-0.2 -2.8M1163 649l5.0 2.1M1076 638l-7.3 2.6M1205 679l5.2 4.2M1120 595l0.4 -4.1M1079 693l1.3 7.2M1214 640l4.6 3.2M1100 592l0.1 -4.8M1146 610l7.5 -0.7M1134 476l0.6 -6.4M1113 692l3.0 8.9M1171 693l6.1 7.5M1009 655l-5.0 2.0M1062 646l-6.3 0.4M1056 464l-3.5 -5.7M1174 657l5.5 2.2M1265 546l4.0 -0.7M987 531l-3.9 -3.1M1041 673l-5.5 3.9M1095 641l-1.9 2.3M1170 659l7.1 5.5M1196 693l7.8 3.3M1225 692l4.9 2.8M1084 661l-4.2 4.2M1160 695l3.4 4.5M965 657l-6.1 -1.8M1164 687l4.0 5.6M1102 675l-0.0 6.7M1108 689l0.1 8.0M1173 662l5.6 4.7M1139 653l5.0 5.4M1095 590l-0.5 -3.7M1180 656l9.9 1.3M1135 662l3.6 7.3M1021 669l-5.3 1.6M1057 658l-4.4 3.3M1204 689l5.7 2.7M1197 515l2.9 -4.2M1226 538l4.3 -6.3M1148 548l3.8 -4.9M1084 603l-5.4 -4.1M1154 543l0.5 -5.0M1130 692l2.8 6.0M1178 646l5.7 1.9M1095 540l0.7 -5.7M1264 542l5.3 -3.0M1124 585l0.3 -4.2M1126 645l3.1 2.3M1073 515l-3.0 -5.7M1086 648l-2.7 1.6M1122 618l0.3 -3.1M1095 470l0.9 -6.5M1096 458l1.5 -5.6M1131 597l-0.7 -2.7M1103 724l-0.6 7.8M1090 454l2.0 -7.2M1149 629l7.7 0.2M1271 536l5.1 -1.7M950 636l-4.7 0.6M1145 650l5.3 2.6M1098 469l1.4 -6.4M1065 647l-6.6 5.2M1044 634l-6.5 2.2M1166 685l4.5 5.3M988 531l-1.5 -6.9M1058 470l-3.2 -6.5M1111 648l0.7 2.4M1097 598l-1.4 -4.8M1074 671l-5.8 5.5M1230 674l7.5 0.6M1149 671l6.0 1.6M1055 699l-2.9 4.5M1115 573l-0.3 -3.8M1086 539l-0.6 -4.3M1063 692l-4.8 7.8M1040 515l1.0 -7.5M1100 548l-1.3 -5.0M1108 672l2.1 5.4M1095 533l1.9 -6.6M1160 661l4.9 3.9M1187 672l8.6 0.5M1107 593l0.0 -4.8M1094 587l-0.3 -4.2M1129 685l2.9 8.2M1043 667l-5.2 0.8M1093 464l-2.9 -6.9M1156 672l5.9 5.8M1035 680l-6.3 6.1M1047 667l-6.3 2.3M1043 644l-6.0 5.1M1174 668l7.2 5.1M1244 552l4.5 -1.7M1251 626l4.5 -0.3M1116 604l-0.5 -3.0M1180 509l3.3 -6.7M1169 491l1.3 -4.8M1194 685l6.0 5.2M957 577l-4.8 -4.0M1234 637l4.9 0.7M1195 672l4.4 3.6M1213 682l8.5 1.8M1146 644l8.9 2.0M1156 540l1.0 -7.5M994 673l-5.4 1.4M1105 587l-1.6 -3.5M1191 652l5.2 2.2M1087 600l0.6 -4.8M1067 700l-4.0 8.1M1252 632l3.7 2.0M953 579l-7.0 -2.1M1195 667l7.4 6.5M1163 697l2.4 4.9M1128 675l3.9 5.8M1112 600l0.1 -2.6M976 663l-6.5 -1.1M1180 690l7.3 4.9M1193 680l6.7 1.4M1187 478l0.4 -6.2M1186 658l7.4 3.1M1118 566l-0.4 -2.9M1202 541l1.1 -5.0M1164 503l2.5 -6.3M1139 555l4.4 -3.7M1102 585l0.1 -2.8M1009 682l-4.5 3.9M1114 668l1.3 8.2M1123 456l1.2 -5.8M1161 699l5.4 7.5M1109 563l1.0 -3.6M1065 627l-4.5 1.2M1055 687l-4.7 3.2M1142 694l4.1 7.7M1026 678l-6.5 4.9M1086 600l1.3 -3.4M1235 629l7.5 2.6M1045 693l-8.0 5.7M1094 688l-3.9 8.5M1169 687l4.7 4.6M1164 697l7.3 4.3M1079 674l-6.3 7.7M1063 686l-5.6 3.5M1146 659l4.9 6.4M1091 493l-2.7 -7.2M1131 480l1.6 -5.2M1025 658l-7.2 3.9M1261 648l7.1 0.3M1040 656l-5.1 2.2M1087 643l-1.2 2.2M992 634l-4.9 -2.1M1054 696l-7.6 2.0M1128 581l-1.2 -4.4M954 569l-4.7 -3.0M1106 660l-1.7 7.9M1267 545l4.5 -4.7M1061 665l-4.3 2.9M1166 704l5.5 7.5M1010 645l-5.9 4.5M1120 649l1.1 2.8M1111 603l0.2 -3.5M1034 675l-3.9 3.7M1061 683l-3.8 5.6M1090 675l-1.4 8.6M1018 665l-6.5 1.6M1149 524l-0.2 -7.3M1105 651l-0.8 5.8M1080 659l-3.3 5.3M1037 676l-5.8 2.8M1137 499l2.7 -7.0M1049 660l-4.7 2.0M1118 592l0.2 -2.9M1074 687l-3.0 5.0M1173 458l3.9 -6.3M1018 656l-9.9 1.1M960 635l-4.8 -0.7M1141 617l4.4 0.3M1161 501l1.3 -5.6M1107 471l-0.7 -6.4M1026 532l-0.6 -5.0M1264 558l6.0 -1.0M1247 630l7.3 -2.0M1033 650l-4.9 2.5M1141 672l2.8 7.6M1091 603l0.7 -4.9M1044 645l-5.8 1.2M983 670l-9.8 1.2M1115 603l1.3 -4.8M1082 681l-2.9 9.5M1074 666l-6.0 5.2M1224 688l5.8 2.4M1102 607l-0.1 -2.8M1120 692l1.4 5.3M1195 699l5.0 5.2M1186 676l8.0 4.8M1066 662l-6.7 3.3M1134 595l4.2 -5.0M1181 651l5.5 5.8M1203 662l5.7 2.7M1087 461l-4.2 -5.9M1249 633l6.4 3.1M1058 487l-1.7 -7.6M1129 687l1.8 5.3M1068 683l-6.8 5.3M1138 687l7.2 5.6M1180 497l3.0 -6.7M967 603l-6.7 -0.7M964 605l-5.1 -1.3M1137 597l4.2 -2.4M1261 554l5.8 -4.0M1188 674l8.3 4.6M1149 642l7.0 3.6M1117 655l2.4 8.3M1031 639l-4.6 1.9M1234 674l7.3 1.7M1234 628l6.8 -1.2M1052 686l-4.2 3.4M953 542l-2.4 -3.3M1124 548l-0.3 -4.5M1147 684l6.9 5.5M960 581l-6.4 0.4M1158 693l3.1 5.6M1089 549l-1.6 -6.2"/>
<path stroke="#8c745b" d="M1192 502l0.9 -4.1M972 624l-4.3 -0.1M1115 500l-0.3 -5.5M1253 616l6.4 3.1M1092 659l-4.4 7.3M1157 621l7.1 0.8M1097 593l-1.4 -3.9M961 534l-4.0 -5.3M1213 685l6.9 5.6M1179 685l8.2 2.2M968 641l-8.8 4.6M1093 557l1.2 -6.4M1188 521l2.4 -7.2M1162 661l6.0 1.5M950 586l-4.9 -0.4M1066 669l-4.1 5.2M1143 544l0.9 -5.1M1039 650l-6.2 3.7M1174 638l5.6 3.1M1148 652l7.5 5.6M1063 671l-5.1 5.0M1044 658l-7.2 3.4M1043 523l-1.6 -6.7M1177 674l6.5 7.2M1202 652l7.8 2.1M1132 451l2.2 -7.4M1066 637l-4.0 1.4M1101 620l0.7 -3.9M1070 449l0.4 -4.8M989 631l-5.7 0.6M1142 489l3.4 -5.2M1151 533l0.4 -6.2M1086 604l-0.4 -3.5M1071 644l-5.2 2.4M1134 497l-0.3 -6.1M1120 573l0.2 -3.8M1102 652l-4.2 7.4M1181 481l2.8 -6.2M1103 609l0.8 -2.6M1218 688l7.1 6.0M1168 471l3.8 -7.0M1112 578l-0.8 -2.7M1103 641l-0.9 4.6M1137 634l5.3 2.7M1060 461l0.3 -4.6M1112 557l-0.2 -4.3M1089 659l-3.7 4.9M1178 703l5.3 3.2M1091 590l0.1 -4.4M1210 641l6.0 1.0M1220 689l7.6 4.7M1089 558l0.7 -4.5M1099 581l0.6 -3.6M1170 649l6.2 4.3M1157 507l-0.3 -7.8M1071 494l-1.5 -3.7M1189 648l8.2 3.9M1254 605l5.3 -0.0M1109 634l1.0 -4.0M1116 492l0.2 -4.3M1101 679l-1.4 8.7M1117 674l2.6 9.3M954 596l-7.4 0.2M1090 535l1.6 -7.6M1025 665l-9.5 3.1M1164 463l-0.3 -4.2M1118 573l0.3 -4.9M1210 537l2.5 -5.4M1092 653l-3.2 5.8M1114 450l1.3 -7.8M1104 548l1.4 -6.1M1093 492l-2.2 -4.4M959 584l-5.7 -1.5M1260 590l5.1 -0.6M1123 452l0.3 -6.6M1166 657l6.4 5.4M1008 647l-7.2 0.4M1271 548l4.1 -0.6M1160 674l6.0 4.6M1058 683l-4.9 7.1M1149 549l4.6 -3.5M995 676l-5.1 4.8M1152 527l-1.1 -6.4M1221 535l5.2 -4.9M1180 492l2.8 -3.6M1221 676l5.5 1.5M1092 521l-1.6 -3.8M1095 471l0.3 -4.8M1068 650l-3.5 4.4M1060 642l-7.1 1.3M1155 510l-1.6 -5.2M1089 686l-3.7 8.3M1214 647l8.1 3.9M1144 693l2.3 5.4M1080 599l-4.7 -0.8M1117 532l-1.2 -5.9M1111 607l-1.2 -4.6M1090 561l-1.8 -3.1M993 630l-7.9 1.1M1116 516l1.8 -3.9M1054 683l-2.5 5.1M1095 533l0.3 -7.0M961 539l-2.2 -3.7M1246 625l4.3 1.0M1024 661l-6.8 0.7M983 666l-7.1 3.0M1134 480l-1.0 -6.3M1099 481l-1.6 -7.4M1096 627l1.1 -4.2M1126 584l0.1 -3.3M1079 539l1.7 -7.0M1161 505l1.5 -5.0M1238 671l6.0 1.7M1042 693l-4.8 3.0M1109 654l-1.9 8.2M1181 639l6.5 0.6M1001 635l-7.8 0.6M1131 611l-0.8 -4.2M1003 682l-8.2 4.0M1223 655l5.9 0.4M1009 665l-5.4 3.8M971 523l-3.3 -3.6M1141 490l2.1 -7.1M961 607l-6.9 1.8M1086 661l-5.0 6.7M1060 454l-2.3 -3.7M1003 522l-3.4 -2.3M1035 670l-5.5 5.4M1161 482l2.0 -4.2M1030 688l-6.8 6.0M1120 546l1.3 -6.1M1048 681l-5.7 2.8M1278 536l4.8 -3.1M1189 654l8.2 4.2M1162 540l0.9 -4.9M1108 456l0.1 -6.8M1121 591l-0.8 -3.9M998 638l-4.4 -1.2M1015 679l-7.6 2.6M1134 668l6.8 6.1M1148 689l3.2 6.1M964 625l-4.3 0.6M1050 499l-0.5 -7.2M1145 658l4.6 3.4M1187 686l3.8 3.3M1187 699l7.0 7.1M1138 637l5.7 3.9M1083 480l-2.9 -6.7M1178 535l2.3 -6.0M1105 478l-0.5 -5.8M1129 579l-1.9 -4.2M1160 672l4.3 2.8M1024 646l-7.5 6.4M1091 570l-0.4 -4.6M1236 634l7.1 -1.2M1122 446l-2.5 -6.5M1053 661l-7.4 6.5M1135 656l3.7 5.2M1108 586l-0.1 -3.4M1135 641l3.7 3.8M1157 536l2.3 -7.1M978 527l-5.4 -4.8M1148 471l1.6 -7.7M1030 689l-5.6 6.2M1037 683l-3.1 4.3M1124 602l0.7 -2.5M1226 636l3.7 1.8M1261 546l7.7 -2.1M1014 678l-7.4 6.4M1049 661l-4.0 6.0M1070 472l-3.0 -4.3M1058 638l-5.6 3.2M1143 456l2.4 -4.7M1263 538l4.8 -2.7M1095 638l1.4 -4.0M952 546l-6.8 -2.4M1176 658l5.1 0.9M1145 636l4.0 4.3M1203 669l4.5 5.6M1069 541l-3.9 -6.2M951 578l-4.9 -1.6M1130 566l-1.2 -4.3M1233 538l3.2 -3.2M1144 652l4.5 4.6M1223 690l6.6 4.0M1260 648l5.2 -0.5M1090 460l-1.4 -6.1M1073 544l-4.5 -5.9M1103 646l-1.1 4.7M1105 604l0.6 -2.8M1096 588l-0.0 -3.8M1140 458l3.6 -6.5M1265 555l7.7 -0.4M971 643l-8.6 -3.0M1161 455l0.1 -4.6M1058 512l-1.8 -7.6M1259 554l6.9 -1.5M1169 518l2.6 -4.0M1043 640l-4.7 2.7M1087 471l0.6 -7.9M1265 544l5.3 -4.1M1105 589l0.1 -3.9M1061 475l-1.1 -5.3M1235 533l1.8 -7.7M1087 615l-0.7 -4.3M1134 686l2.5 5.7M1263 549l5.2 -3.1M1048 644l-8.9 4.4M997 532l-4.0 -5.3M1108 504l-3.0 -5.5M1210 541l5.0 -2.6M1119 521l-1.6 -6.9M1127 644l2.7 3.6M1105 571l-0.8 -4.7M1203 648l4.8 1.3M1027 654l-5.5 2.2M1094 622l-0.4 -4.8M1007 526l0.4 -5.0M1110 496l-1.0 -6.3M1057 655l-6.3 3.9M1113 625l0.5 -2.5M1129 649l3.8 1.8M1141 626l6.2 1.2M1100 666l-1.4 8.0M1087 475l-1.2 -7.7M1056 665l-4.6 3.2M979 632l-6.5 -2.2M1045 524l-3.6 -6.0M1130 674l5.4 7.6M1264 604l5.2 0.7M1091 538l-3.2 -6.8M1034 700l-4.5 5.3M1249 633l5.0 1.9M1110 469l-2.2 -6.5M954 521l-6.1 -5.1M1153 539l0.2 -4.1M965 643l-6.9 4.2M1004 529l-3.7 -6.5M1248 629l4.2 -0.4M1067 676l-6.8 6.0M1024 686l-5.7 2.7M1196 704l7.1 1.6M1072 652l-8.4 2.9M1240 631l7.8 -0.5M1192 680l6.6 6.1M1217 680l7.9 2.6M971 641l-6.3 1.9M1134 670l3.2 5.5M1174 498l1.9 -6.3M1106 481l-2.4 -7.3M971 654l-6.8 -0.1M1160 486l2.9 -7.3M1148 633l7.3 0.6M1109 601l0.3 -2.6M1104 575l0.1 -3.6M1049 680l-5.5 3.3M1158 540l0.9 -4.1M1060 679l-3.9 7.7M1121 602l-0.3 -4.4M960 577l-7.3 -0.3M1194 528l2.0 -4.3"/>
<path stroke="#3a2c25" d="M1082 456l1.5 -7.5M1146 460l0.5 -6.9M1020 636l-4.8 0.7M1187 506l3.2 -3.8M1103 532l-0.9 -4.7M967 625l-7.5 0.2M1105 635l1.0 -3.5M1085 478l0.3 -6.0M972 639l-4.9 1.8M961 634l-7.0 3.0M1126 508l0.8 -4.5M1209 535l4.9 -5.3M1117 473l1.0 -7.3M1139 523l-1.3 -5.0M1052 629l-7.6 -0.9M1020 636l-5.9 0.3M1217 668l6.7 6.9M1087 518l-2.7 -6.4M1212 659l9.6 0.3M1073 492l-4.3 -4.7M1054 520l-1.8 -7.5M1157 486l1.0 -7.9M1095 572l-0.6 -4.3M1047 515l-1.1 -4.3M1236 645l9.5 2.1M1136 488l0.4 -4.1M1156 619l5.9 0.3M1195 652l5.9 1.7M1110 471l-1.3 -7.0M1144 481l1.7 -6.6M1256 591l7.2 2.6M1114 582l0.7 -4.1M1068 452l-1.4 -4.7M1008 684l-8.9 2.0M1101 557l-0.4 -4.5M1115 469l-0.2 -5.1M1270 597l5.5 -0.9M1124 486l1.2 -6.6M1239 652l5.7 1.8M1238 539l2.4 -5.1M965 621l-5.1 -4.0M1066 476l-0.1 -5.7M1146 501l2.0 -5.6M1197 681l6.7 4.7M982 654l-8.1 2.1M1243 651l7.5 -1.6M1091 619l0.8 -3.7M1269 597l5.4 -1.7M1173 499l1.1 -4.7M1051 478l-1.7 -4.7M1269 598l4.0 -1.1M1099 528l1.3 -5.5M1239 667l5.4 0.6M1065 492l-3.3 -6.6M980 520l-2.6 -3.6M1097 627l1.7 -4.0M1101 508l0.6 -6.4M1059 470l1.1 -5.8M1054 520l-0.6 -5.5M1222 666l9.4 -0.8M1268 597l5.2 -0.6M1072 623l-5.2 -1.5M1133 614l5.0 -2.1M1141 611l6.5 1.0M1113 615l0.0 -3.5M1011 687l-4.6 2.8M1153 468l1.3 -3.8M1080 527l0.5 -7.7M1075 490l-0.8 -5.4M1101 603l0.9 -3.8M1257 559l4.4 -1.6M1201 703l6.9 2.1M1171 478l1.9 -4.4M1057 650l-7.7 5.7M1081 528l1.0 -3.9M1138 537l-1.2 -6.9M1084 446l-0.9 -4.9M1197 525l2.9 -3.4M1082 461l1.0 -4.9M1084 530l-1.5 -4.1M980 658l-8.3 0.3M1161 457l0.5 -4.3M1112 509l-0.9 -6.1M1084 525l0.3 -6.8M1001 644l-6.0 0.9M1152 472l2.7 -4.5M1149 507l1.7 -5.9M1057 489l-2.6 -4.3M1110 450l1.6 -4.9M1182 512l-0.3 -5.2M955 524l-3.9 -4.3M1112 473l1.2 -4.1M1154 526l3.1 -7.2M1206 534l3.4 -5.0M1051 688l-7.6 5.5M1179 475l1.4 -4.1M1081 505l0.3 -5.5M966 623l-6.3 -1.1M1112 449l-0.9 -6.7M1082 534l-1.6 -7.3M1192 509l1.6 -7.1M1232 644l8.8 4.1M1060 532l-2.9 -6.7M1124 494l-0.0 -7.7M1053 524l-1.0 -5.8M1099 508l-0.7 -4.6M1152 480l1.3 -3.8M1129 454l0.8 -6.3M1185 533l2.0 -4.2M1071 528l-1.4 -5.1M1153 454l1.3 -4.0M1052 504l-3.4 -4.3M1216 665l5.3 3.6M1127 478l0.1 -6.4M1102 500l-1.1 -4.3M984 639l-6.9 1.9M994 648l-7.6 0.3M1228 533l3.2 -6.3M1198 699l4.0 3.2M1077 461l-1.1 -5.6M1079 482l-0.9 -4.7M1085 629l0.1 -4.1M1056 463l-3.7 -6.8M1147 507l-0.4 -4.3M1119 483l1.2 -5.0M1114 530l0.9 -7.2M950 534l-3.1 -5.1M1145 606l7.5 0.2M990 664l-6.0 1.3M1117 636l-0.4 -4.0M1107 661l1.0 5.7M1183 485l2.1 -4.9M1089 446l-1.8 -3.9M1087 603l0.4 -2.8M1112 466l-0.0 -5.6M1054 528l-0.2 -5.5M1151 488l3.4 -6.0M1171 537l3.1 -4.6M1138 516l1.6 -6.6M1008 637l-4.5 2.9M1017 529l-2.5 -3.5M1056 529l-1.3 -4.2M955 617l-4.6 -2.0M1056 532l-1.4 -5.5M976 637l-8.0 0.6M972 652l-7.1 4.2M1105 634l0.2 -2.8M1090 626l0.9 -4.3M1142 621l6.8 2.1M1162 539l2.0 -6.1M1089 464l1.5 -7.3M993 662l-8.1 0.2M1128 502l-0.4 -5.4M1085 489l0.3 -6.5M1073 493l-3.6 -5.0M1085 537l-2.4 -6.5M1186 486l2.6 -7.1M1135 520l1.3 -6.7M1077 621l-6.9 -0.1M1144 515l1.3 -4.4M1238 668l7.2 0.2M1226 654l6.5 0.5M1083 475l-0.3 -4.7M1149 534l2.0 -5.1M1060 514l-1.7 -7.3M1035 526l-2.4 -6.8M1121 612l-0.4 -4.5M1074 461l0.7 -6.3M1078 467l-0.1 -4.4M1158 528l-1.4 -7.8M1263 608l5.1 -1.2M1099 519l1.2 -4.0M1002 645l-8.3 0.4M1159 495l0.1 -4.0M1050 528l-0.2 -6.9M1087 633l-0.5 -4.7M957 605l-5.5 -1.4M1057 506l-2.0 -4.1M1148 501l1.3 -4.1M1043 514l-1.8 -3.9M1107 492l0.6 -5.2M1157 541l-0.2 -5.0M1073 532l-0.9 -7.2M1170 534l2.1 -5.7M1217 652l9.2 3.0M1122 526l-0.7 -7.3M1055 527l-1.4 -7.1M1092 517l0.2 -6.6M1105 514l0.6 -4.1M1246 640l5.2 1.7M1192 534l2.9 -5.4M1086 515l1.7 -3.8M1123 497l-1.4 -5.3M1167 470l2.5 -7.4M1244 663l5.8 0.9M1133 485l0.6 -5.2M1049 517l-2.5 -4.1M1181 519l1.8 -6.8M1059 537l-1.2 -5.8M1158 453l1.3 -5.5M1123 538l-1.9 -4.7M1157 484l1.1 -5.1M1144 535l-0.9 -7.0M1093 513l-1.3 -3.8M1096 459l-1.5 -6.7M1212 662l7.7 2.4M1080 485l1.1 -5.6M1173 526l1.9 -7.1M1126 536l0.1 -6.8M1123 499l1.6 -5.4M1010 680l-5.1 5.9M1085 498l0.4 -5.6M1158 455l0.4 -4.7M969 630l-4.9 -0.9M988 626l-6.2 0.1M1180 510l3.0 -4.8M1002 655l-9.2 1.1M1207 678l9.0 1.8M1111 518l0.2 -6.8M958 596l-4.0 0.5M1081 507l-0.2 -4.5M963 625l-4.9 1.2M964 603l-6.0 -2.6M1074 506l-0.8 -5.6M1266 602l6.4 -0.1M1136 509l2.6 -5.7M955 620l-4.9 -0.4M978 659l-5.6 0.5M1197 527l2.1 -5.6M1076 476l-0.1 -7.6M1064 533l0.2 -7.4M1152 624l7.9 -0.0M1128 619l0.5 -2.8M1118 453l-1.7 -6.1M1103 475l-1.0 -6.1M1048 528l-0.8 -5.9M1046 485l-1.3 -5.0M1254 540l5.8 -5.1M1239 533l4.4 -3.0M1040 640l-6.6 2.2M1150 495l2.6 -4.8M1113 467l0.6 -4.3M980 635l-6.6 -0.6M1211 662l5.1 2.2M1118 501l-0.3 -4.3M1075 693l-5.0 8.4M1120 620l0.4 -4.9M1073 491l-1.1 -5.3M987 641l-9.3 0.0M962 522l-2.4 -3.3M1263 615l6.2 4.5M1111 573l0.7 -2.5M1114 467l1.4 -7.6M984 524l-2.6 -4.4M1173 470l0.9 -7.6M1109 463l-0.1 -5.0M1082 485l-0.5 -4.8M1082 491l-1.4 -5.7M1114 639l-1.1 -2.3M1092 641l-2.5 2.8M994 674l-8.3 1.7M1227 661l6.3 0.0M1215 689l5.0 4.5M1118 497l-0.3 -4.9M1088 465l-0.9 -4.3M1025 530l-0.8 -6.1M973 644l-9.2 0.8M994 663l-7.5 6.5M975 656l-9.5 2.9M1038 528l-1.7 -5.1M1147 506l0.4 -5.0M978 631l-5.5 -0.2M1055 513l-0.4 -4.8M1101 509l-2.2 -4.5M1253 653l8.9 1.0M1066 526l-3.2 -6.5M1150 513l1.0 -4.2M1085 500l-0.3 -4.2M1088 501l-1.9 -6.3M1093 518l-2.3 -6.3M1165 530l1.5 -5.3M1038 649l-5.5 0.9M960 540l-3.2 -2.6M1185 486l2.1 -7.5M1076 513l-1.2 -7.2M1139 627l6.7 0.1M1115 537l2.1 -4.1M1077 509l-0.0 -6.1M973 636l-7.4 0.4M1077 515l-0.1 -4.1M1042 518l-1.7 -6.3M1075 494l-0.4 -5.5M1255 625l5.3 -0.9M1101 513l-2.1 -7.6M1017 532l-3.5 -5.4M1158 507l0.7 -7.3M1078 452l-0.6 -7.8M958 579l-7.5 -1.9M1137 512l0.8 -6.6M965 648l-6.5 2.1M1102 475l-0.5 -5.3M1083 502l1.3 -7.8M999 668l-6.7 1.7M1037 507l-1.6 -6.2M1112 573l0.2 -5.0M1125 617l0.4 -3.5M1149 462l0.9 -6.4M1102 481l0.7 -7.6M995 656l-4.8 1.9M1120 499l-1.2 -7.2M1126 444l0.1 -4.6M1088 531l-0.7 -7.5M1101 447l-1.3 -4.4M1060 523l-0.4 -5.6M1101 486l-0.2 -5.3M1072 524l-1.6 -7.0M1229 657l7.8 6.2M1083 615l-7.3 -0.1M1212 531l5.1 -5.2M993 661l-7.7 0.8M1082 472l0.1 -5.4M1070 671l-6.9 4.4M1086 500l-0.6 -5.1M1245 538l1.5 -6.7M1128 614l-0.7 -4.2M969 610l-6.0 -0.5M1164 540l0.1 -7.4M1203 683l6.3 5.8M1101 630l1.0 -3.3M1127 501l0.6 -4.0M1057 529l-0.6 -4.6M1125 620l-0.4 -3.6M1156 489l0.8 -4.4M1014 679l-5.5 2.0M1082 456l1.5 -4.5M980 636l-6.4 1.5M1161 518l-0.2 -5.2M1128 517l1.2 -7.7M1199 528l2.1 -6.8M1080 449l-0.5 -4.7M1008 678l-7.5 5.4M1092 515l-1.0 -4.8M1058 537l-0.6 -4.1M1070 535l-3.6 -4.8M966 651l-6.5 2.3M1130 634l0.3 -4.9M997 640l-7.4 -1.8M1240 652l5.8 3.4M1118 468l-1.0 -7.2M1124 536l2.5 -5.7M957 599l-6.5 -1.0M977 634l-5.8 0.1M1098 448l-1.4 -5.0M1051 491l-2.6 -5.6M1242 653l8.0 0.4M1243 648l5.4 0.9M1137 478l-0.9 -4.2M978 523l-1.7 -3.9M965 630l-7.3 0.1M1127 536l1.2 -4.0M1153 487l-1.4 -7.7M1111 469l-0.7 -4.0M1127 451l0.1 -7.9M1104 481l-3.0 -5.2M956 588l-5.8 0.6M1059 493l-3.7 -5.2M1096 633l0.1 -4.6M1068 522l-2.4 -5.6M966 537l-4.1 -2.8M1110 500l1.5 -7.2M1137 502l-0.1 -6.2M1166 533l1.6 -4.9M991 675l-6.6 1.6M1203 527l5.0 -4.1M1165 542l1.8 -6.1M1077 489l-2.2 -5.3M953 531l-4.5 -6.3M1191 506l2.7 -4.6M1112 627l0.3 -3.0M1086 625l-0.9 -3.4M983 623l-4.8 1.1M1102 452l-1.8 -6.1M1063 533l-2.4 -4.1M1144 496l-0.2 -4.3M1067 539l-1.5 -4.2M1122 588l1.0 -2.5M1139 600l7.3 -2.6M1126 527l1.6 -5.3M1229 666l5.1 -0.0M1122 532l-2.2 -6.5"/>
<path stroke="#75604c" d="M1050 632l-4.9 3.2M988 664l-3.9 3.1M1008 650l-6.3 1.5M1060 642l-6.6 3.7M1123 635l0.7 -4.2M1107 568l0.3 -4.5M1186 503l1.8 -4.6M1092 489l0.7 -4.1M1054 664l-4.0 4.8M1107 513l-1.8 -7.6M1114 653l-0.9 7.6M1028 683l-3.8 5.5M1224 672l6.0 2.1M1004 668l-9.6 1.8M1099 462l-1.3 -5.1M1165 688l5.5 8.0M1091 645l-2.0 3.1M1157 637l3.5 4.0M1216 649l5.1 1.8M1176 638l4.2 2.7M1101 540l0.0 -7.3M1063 649l-5.0 3.4M1179 646l7.1 1.9M1174 529l1.7 -5.5M1128 646l1.4 2.3M1267 570l5.0 -0.5M1045 520l-1.3 -5.8M1083 669l-2.4 9.1M1034 682l-6.5 5.0M1173 694l4.9 4.3M1025 643l-7.6 2.4M1007 646l-5.0 1.4M1159 668l5.6 6.3M1113 513l-0.3 -5.5M1258 545l1.3 -5.5M1189 529l3.6 -3.9M1098 480l0.8 -4.1M1123 648l1.8 3.6M1254 635l7.1 1.7M1162 631l5.1 0.5M1105 638l0.1 -3.8M1165 509l1.5 -6.3M1188 533l2.5 -7.5M1227 540l3.1 -2.6M1165 694l3.8 7.2M1107 561l0.8 -2.9M1088 640l-1.4 3.3M1099 637l0.7 -3.2M1153 462l2.0 -7.2M1096 585l0.8 -3.7M1214 665l6.3 3.1M1171 689l6.3 5.6M1128 684l-1.1 9.4M1133 645l3.7 5.0M1176 462l-1.0 -7.8M1190 526l2.3 -5.8M1121 470l-0.1 -4.7M956 537l-5.0 -2.8M1230 631l7.1 -0.4M1131 550l3.0 -5.4M1107 558l-0.1 -5.9M1123 686l2.2 6.8M1167 507l1.1 -5.2M1048 497l-0.1 -6.9M1122 669l0.4 5.8M1106 458l-0.9 -5.5M1238 628l5.6 -0.2M1167 715l4.7 5.4M1065 488l-2.1 -5.2M1139 674l3.7 6.4M1219 681l4.8 1.8M1089 561l-0.1 -3.6M988 650l-8.6 -0.7M1112 520l1.3 -6.3M1071 630l-4.1 2.6M1121 651l2.9 5.6M1171 668l6.8 4.7M1114 620l0.6 -2.8M1054 502l-1.8 -4.8M1072 625l-3.6 2.3M1142 697l2.6 8.3M973 641l-9.2 1.3M1276 540l4.8 -6.2M1095 572l1.1 -4.3M1167 496l2.8 -7.0M979 533l-2.8 -5.8M1259 538l3.2 -6.1M961 601l-7.8 0.5M1179 491l0.5 -5.2M1147 655l4.5 8.0M1170 506l2.2 -4.9M1251 662l5.2 -0.1M1119 554l-0.8 -4.4M1169 461l1.1 -7.7M1211 685l6.4 6.8M1143 628l4.2 1.4M1172 455l0.7 -4.3M1072 460l-1.6 -7.2M1144 633l3.9 2.1M1059 682l-3.8 7.3M947 526l-3.8 -2.2M1086 626l-0.8 -2.7M1135 555l1.7 -6.6M1199 699l4.1 4.3M1045 676l-6.6 6.7M1191 681l5.6 5.6M1186 702l4.4 3.1M1090 543l-2.0 -4.8M1190 689l7.7 5.7M1183 692l6.2 7.8M1055 650l-6.3 5.2M1154 640l8.7 1.7M1116 516l-0.4 -4.3M1124 580l-2.2 -3.9M1119 657l1.4 4.9M957 554l-7.3 -2.9M1190 703l3.2 4.8M1185 674l5.8 2.9M1126 594l-0.7 -2.8M1147 636l5.5 4.2M1117 476l-1.6 -6.4M1081 593l-4.1 -2.5M1106 672l0.1 5.1M1072 505l0.8 -6.5M1226 540l3.5 -7.0M1268 567l4.2 -0.5M1100 581l-2.0 -3.9M1135 561l2.9 -6.7M1150 700l7.5 6.1M1138 681l4.3 5.4M1048 695l-2.1 4.7M1101 679l-4.2 7.6M1236 678l3.8 3.7M1230 544l3.9 -6.2M1096 530l1.4 -7.0M1139 464l1.2 -7.6M1149 625l5.9 -0.7M1119 677l-0.7 5.0M1139 450l1.5 -4.6M964 634l-5.8 -1.4M1238 674l5.4 2.1M1103 510l-1.5 -6.0M1127 469l3.0 -5.6M1131 492l-1.3 -6.3M1057 675l-6.3 5.1M1046 682l-6.6 4.7M1104 445l-0.5 -4.7M1046 489l-1.9 -4.2M1163 667l2.8 4.6M967 531l-6.5 -4.5M958 526l-3.5 -5.7M952 578l-6.8 0.0M1080 535l0.3 -6.2M1117 565l-0.8 -2.9M1123 555l1.0 -4.6M1221 665l6.8 1.9M1125 597l-1.2 -2.4M1123 609l-0.5 -3.6M1172 677l6.1 7.2M1166 473l5.0 -5.4M1063 504l0.0 -6.7M1062 516l-0.8 -5.5M1136 652l8.0 5.0M1128 678l1.8 9.1M1262 621l5.8 2.0M1061 625l-5.4 -0.2M1074 657l-8.2 4.0M1070 510l-1.9 -7.4M1083 651l-5.0 7.3M1089 580l-0.4 -4.9M1136 666l5.0 4.6M966 611l-4.1 1.6M1211 646l8.4 -0.0M1122 560l-1.9 -6.4M1098 630l0.3 -2.6M1220 672l4.9 -1.9M1089 504l1.3 -7.1M974 637l-7.4 1.7M1080 607l-5.0 -0.3M1180 647l5.5 6.5M1003 677l-6.5 4.1M1085 603l-4.2 -3.3M1111 575l0.3 -3.2M1045 497l0.7 -4.3M978 617l-7.3 0.2M1082 677l-2.1 7.5M1044 673l-4.9 3.2M966 596l-7.2 -2.2M1082 613l-7.9 -0.4M1227 635l5.6 1.0M1011 669l-5.4 1.4M1186 503l-0.1 -6.3M1142 466l-0.5 -6.3M1106 488l1.1 -7.8M963 535l-5.9 -3.5M1154 505l1.1 -5.5M1053 478l-1.7 -5.1M1112 474l1.1 -6.7M1142 597l7.2 -3.1M1241 653l9.4 1.6M1153 619l4.9 1.1M1179 494l2.8 -4.8M1164 664l7.3 4.1M974 527l-3.4 -3.0M1080 451l-3.6 -6.2M1125 467l-0.0 -7.1M1151 684l6.1 7.4M1096 557l1.3 -7.5M1120 582l-1.7 -4.2M1150 549l2.2 -3.4M1181 684l2.9 4.3M1105 577l-0.2 -3.6M1177 465l-0.2 -4.3M1092 554l-0.3 -6.4M1169 524l2.0 -4.8M1240 542l2.3 -4.8M1105 656l1.2 7.0M1071 458l-2.4 -4.7M1182 508l2.5 -3.7M1121 631l0.7 -4.5M1045 657l-5.1 -0.0M1265 578l4.6 -1.4M1117 591l-0.0 -3.2M1045 676l-6.6 5.4M1127 661l5.7 6.6M1057 476l-0.9 -6.4M1208 658l4.9 1.0M1089 480l-1.4 -5.6M1115 660l4.5 8.1M1117 584l-0.2 -2.8M1046 688l-6.8 7.3M1180 513l3.1 -6.3M1078 674l-3.0 5.8M1059 661l-7.7 5.7M1004 676l-6.6 3.9M1025 682l-6.7 4.2M1122 484l-0.5 -7.4M1073 695l-2.5 6.0M1058 494l-0.4 -7.9M1107 584l-0.8 -2.6M1104 685l-4.1 8.4M1075 604l-5.2 -1.1M1166 657l7.5 4.2M1133 522l1.2 -6.6M1143 601l4.3 -1.3"/>
<path stroke="#ffffff" d="M1131 726l2.3 4.5M1264 546l6.8 -0.8M1030 658l-4.4 3.1M1205 687l9.9 0.7M1076 692l-3.2 9.0M1116 708l0.2 5.3M1093 702l1.8 9.0M1247 677l3.8 3.4M1156 716l5.3 7.4M1121 704l2.3 9.3M1112 572l-0.6 -3.4M1068 711l-6.7 7.2M968 526l-4.5 -6.4M1074 655l-6.1 5.9M1089 560l1.2 -6.9M1100 723l1.6 9.0M1090 466l-2.7 -6.2M1129 658l4.1 4.5M1020 671l-8.9 3.7M1107 716l0.3 9.6M1116 605l-0.5 -3.3M1077 695l-3.9 5.2M1089 709l-1.3 9.6M1121 685l1.7 7.6M1112 529l-1.2 -5.3M1129 726l0.8 5.5M1108 708l-1.0 5.4M1105 694l-2.0 9.3M1023 661l-5.1 5.0M1162 480l-0.0 -5.6M1142 712l0.8 6.8M1230 534l2.2 -3.6M1163 460l2.6 -5.1M1111 704l0.7 5.6M1091 719l-2.9 7.0M1164 708l5.4 6.9M1100 650l0.5 5.3M1105 693l-2.9 9.2M1114 724l-1.3 5.7M1123 713l2.3 9.5M1053 702l-3.8 4.4M1110 529l-2.1 -7.2M1055 708l-4.8 4.2M1058 706l-3.3 5.9M1115 723l2.4 5.8M1236 675l6.4 2.5M1088 483l-0.5 -4.7M1069 713l-4.1 7.4M1051 667l-5.4 6.6M1116 722l1.9 7.9M1144 702l3.5 4.5M1152 519l0.3 -4.2M1142 702l2.9 7.1M1250 614l4.5 -0.6M1035 689l-8.5 2.6M1248 611l4.7 -0.1M1089 703l-1.1 5.8M1218 686l9.0 1.8M1118 595l-0.4 -2.8M1175 640l6.7 1.1M1260 589l4.1 -1.1M1196 695l5.3 4.3M1070 703l-2.7 4.6M1137 718l2.1 8.3M1170 633l5.0 -0.2M1146 642l5.4 3.9M1052 628l-4.5 0.1M1179 655l3.8 3.8M1035 650l-7.2 0.6M1171 662l8.1 5.8M1245 670l6.4 0.9M1132 674l1.5 8.5M1186 690l5.9 4.3M1188 651l6.3 3.1M1149 701l5.7 6.9M1107 612l-0.9 -3.6M1154 519l1.2 -4.7M1152 677l3.2 9.0M1071 683l-3.0 5.6M1049 497l-0.9 -6.0M1097 707l-0.5 8.2M1159 698l3.8 5.1M1110 707l0.2 6.4M1084 599l-3.9 -1.4M1124 722l1.5 5.7M1109 695l-0.5 6.8M1061 705l-3.6 6.8M1137 718l3.4 7.4M1081 720l-1.9 6.4M1183 697l6.1 6.5M1121 538l1.3 -5.5M1199 704l5.1 2.5M1008 682l-8.8 0.3M1134 718l2.2 5.7M952 528l-2.2 -3.7M1148 715l2.7 5.5M964 536l-2.1 -4.9M1176 701l5.7 8.2M1106 693l-0.5 8.1M1132 708l2.2 5.4M1238 681l8.0 3.2M1159 708l4.5 5.9M1088 704l0.0 8.9M1146 703l2.9 6.2M1150 661l4.7 5.0M1135 577l4.8 -3.8M1104 717l0.2 8.0M1108 691l0.3 5.5M1088 689l-2.8 7.3M1189 698l7.6 4.9M1057 665l-5.7 2.2M1116 692l1.9 8.4M1257 536l3.6 -3.9M1078 712l-0.6 7.5M1098 697l0.7 6.9M1153 707l3.6 7.7M1133 546l0.1 -4.5M1118 711l2.6 9.3M1103 693l1.8 9.1M1158 508l1.8 -6.6M1262 547l4.7 -1.3M1155 650l4.7 2.8M1101 610l0.3 -3.5M1079 545l-1.2 -6.1M1132 637l6.9 2.6M1149 707l6.8 5.7M1090 646l-2.0 1.6M1199 639l6.0 -0.9M1125 466l-1.4 -5.7M1035 683l-4.5 5.6M1156 671l6.3 4.6M1102 709l0.7 5.1M1202 701l9.7 1.8M1103 721l-0.7 5.3M1115 546l0.1 -4.8M1059 640l-8.8 1.7M1126 693l2.8 6.0M1054 656l-7.8 3.6M1139 710l2.7 4.4M1055 484l-1.1 -4.9M1073 717l-2.9 6.5M1105 705l2.2 7.9M1085 541l-1.8 -5.8M1096 623l0.9 -2.4M1228 545l4.7 -0.8"/>
<path stroke="#d6bd9f" d="M1222 538l1.9 -3.5M1123 468l1.1 -6.4M1111 600l-0.1 -3.0M1038 644l-8.6 2.2M1087 490l-1.5 -7.5M1024 687l-5.9 2.0M1090 583l1.4 -3.1M1139 601l7.5 1.3M1168 701l5.2 3.3M1189 490l2.7 -4.8M1006 671l-5.1 4.6M949 536l-1.9 -4.4M1160 466l0.7 -6.6M1106 602l-0.5 -4.7M1061 650l-5.8 4.2M1222 682l4.2 5.9M1114 677l1.0 5.2M1047 705l-5.9 5.6M1157 646l7.8 3.9M1087 604l0.1 -4.8M1014 659l-5.4 4.2M1106 675l-3.3 4.9M1101 564l0.6 -4.2M1089 477l-1.4 -6.4M1127 569l0.9 -4.6M1076 654l-4.9 4.4M1227 543l2.4 -7.3M1037 678l-5.3 4.2M1051 647l-9.0 2.8M1010 682l-6.8 5.5M1060 649l-7.9 5.6M1162 669l6.0 7.1M996 680l-6.5 1.1M1196 660l7.2 4.5M1136 543l2.6 -5.2M1164 634l5.4 -0.3M1056 462l-2.1 -3.7M1107 589l-0.4 -3.7M1241 539l2.7 -2.9M1159 680l4.4 3.4M1007 632l-4.1 0.2M964 521l-2.5 -4.8M1260 583l7.7 -1.9M1089 661l-2.6 6.5M1268 550l5.1 0.1M1075 669l-5.4 4.7M1136 498l2.1 -6.9M1111 559l1.3 -4.8M1114 697l0.9 5.4M1172 648l6.5 5.2M1059 537l-1.4 -4.6M1178 701l5.3 7.3M1103 552l1.5 -6.4M1162 487l2.7 -3.4M1200 521l3.6 -7.0M1161 494l2.8 -5.4M1193 498l3.6 -4.7M1163 666l7.1 2.6M1224 530l2.8 -6.8M1031 659l-5.1 3.3M1063 497l-2.3 -6.6M1100 566l0.3 -4.3M1261 561l6.5 -3.9M1128 660l4.2 6.4M1199 518l1.5 -4.6M1246 637l7.3 0.1M1082 683l0.4 5.0M1057 638l-6.7 2.1M954 552l-7.8 -1.1M1265 572l6.0 -3.1M1247 635l6.0 0.5M1124 658l3.7 3.5M1017 655l-8.8 3.7M1183 480l0.2 -6.4M1174 708l4.7 5.7M1140 613l5.6 -1.0M1089 482l-2.7 -7.5M1044 524l-2.3 -4.3M1005 647l-5.9 0.6M953 564l-5.1 -2.0M1180 696l4.7 7.0M1106 701l-2.3 8.3M1270 564l4.8 -0.4M1103 559l-1.0 -6.0M1133 509l1.2 -7.0M1042 659l-4.2 6.3M1071 669l-5.1 4.3M1237 637l6.6 -1.1M1005 676l-8.4 5.4M1132 541l-0.2 -4.5M1018 635l-5.9 1.3M1160 687l4.8 4.5M1151 539l0.6 -4.8M1089 665l-3.7 8.6M1117 462l0.9 -6.6M1127 544l0.7 -6.1M1105 580l-1.6 -4.5M1164 708l3.7 4.8M1095 540l0.7 -5.8M965 542l-3.0 -4.6M1123 562l1.0 -4.8M1023 641l-6.7 0.6M957 582l-6.1 -3.4M1121 670l0.7 9.2M1156 664l4.9 4.7M1120 606l0.9 -2.4M1109 485l1.0 -5.1M1140 717l-1.7 8.9M1130 675l3.9 6.6M1062 680l-4.0 8.4M1031 648l-8.5 3.1M1223 645l5.1 1.1M1132 621l5.7 1.5M1243 656l7.2 4.0M1030 687l-4.3 6.2M1232 645l9.8 -0.0M1117 540l-1.0 -4.2M1079 630l-6.6 4.3M1165 692l6.9 6.7M1177 697l4.4 5.7M1248 548l7.7 -0.3M1032 670l-8.0 3.8M1075 526l-0.7 -4.0M1200 675l5.0 0.6M1222 634l6.0 -1.1M979 660l-6.8 1.9M1034 674l-5.7 1.7M1113 567l1.1 -4.3M1042 667l-5.0 2.1M1141 594l3.6 -1.8M1130 652l3.4 4.9M1092 689l-0.0 9.7M1161 681l3.8 3.8M1093 601l-0.6 -2.7M964 592l-4.6 0.2M1108 713l0.1 6.0M1148 538l2.4 -6.3M1190 657l7.6 4.8M1225 636l5.9 -2.0M968 521l-4.9 -5.3M1019 641l-9.2 1.9M1219 683l7.3 1.6M1091 654l-4.3 6.5M971 612l-7.5 -2.7M1161 673l5.7 6.5M1181 697l5.5 4.5M1047 645l-6.9 -0.6M1169 634l6.2 1.1M1199 660l9.3 2.4M1027 671l-7.2 6.5M1187 643l5.7 0.5M1168 462l2.6 -7.5M1074 539l-1.4 -5.4M1081 542l0.5 -6.2M1053 661l-5.4 2.7M1092 703l-3.4 8.3M1190 705l4.4 3.3M1198 692l8.0 4.9M1045 691l-4.7 5.3M1090 537l-2.2 -7.2M1023 636l-4.7 0.2M1059 494l-1.7 -5.9M1156 653l4.7 3.2M1101 596l-1.8 -4.5M1104 555l-0.1 -5.2M1006 683l-6.9 6.7M1065 641l-5.1 1.9M1230 642l6.9 2.7M1150 692l5.8 5.3M1197 644l6.4 -0.6M1203 664l9.9 0.7M1116 681l2.1 6.8M1067 677l-5.7 6.6M1029 689l-2.8 4.9M1266 547l5.1 -2.4M1099 669l-1.9 8.2M1100 665l-4.0 7.7M1169 638l5.2 4.3M974 628l-6.8 0.1M1110 693l-1.0 5.3M1003 678l-6.5 6.0M1203 700l3.7 4.2M1165 690l3.7 3.8M1220 680l9.1 2.6M1020 674l-5.4 3.8M1216 533l1.5 -4.9M1174 652l7.2 1.3M1155 680l5.8 4.6M1036 679l-4.8 3.0M1192 523l1.3 -5.6M1168 489l0.6 -5.6M1031 670l-5.3 3.3M1179 644l4.3 4.5M1043 667l-4.4 3.7M1262 578l7.2 -1.8M1125 546l1.3 -6.8M1090 564l0.6 -4.7M1023 684l-5.7 2.5M1184 645l6.5 1.7M1161 482l2.0 -5.5M955 540l-1.2 -5.2M1081 684l-2.7 5.0M1081 668l-4.4 5.8M1041 667l-7.4 0.9M955 550l-6.1 -0.5M1001 674l-7.6 3.4M1140 671l4.0 5.5M1136 581l4.6 -4.5M1212 641l4.4 3.2M969 614l-7.6 0.8M966 620l-4.7 -1.4M1075 610l-7.4 -2.3M1256 608l7.8 0.4M1153 705l2.4 5.1M1163 641l9.6 1.6M1149 527l2.1 -7.3M1269 546l5.6 -3.6M963 641l-6.4 0.9M1158 507l0.5 -6.9M1148 629l6.3 -0.4M1258 592l5.7 -0.5M1030 633l-5.4 1.2M1256 658l7.1 0.7M1001 673l-7.9 5.8M1166 650l5.7 1.9M1162 689l3.6 4.3M1137 643l7.2 6.7M1147 672l6.3 5.2M1011 669l-5.9 3.3M1057 495l-2.5 -6.9M1147 548l4.6 -5.1M1018 675l-7.1 2.1M1169 634l5.0 2.3M952 538l-5.9 -5.4M1068 474l-3.1 -6.7M1220 641l8.5 -0.8M1063 491l-1.7 -6.2M1225 680l7.1 1.9M1194 649l5.9 2.1M1174 710l6.4 5.8M1217 681l7.8 2.6M1068 653l-5.5 3.4M989 632l-6.3 1.4M961 565l-6.1 -0.2M1014 638l-7.5 0.5M1172 683l5.1 5.1M1185 704l5.6 4.4M1124 643l1.8 3.3M987 667l-9.2 2.0M1187 696l4.2 4.3M1045 520l-0.6 -6.8M1115 668l4.0 8.7M1156 637l5.1 1.2M1019 664l-7.0 4.1M1195 673l8.0 2.5M1068 669l-4.8 3.6M1065 472l-0.5 -4.4M1094 603l-0.4 -3.3M1048 660l-5.0 2.0M1073 650l-7.5 6.5M1116 574l-0.7 -2.9M1165 681l8.8 4.5M1036 695l-5.9 7.9M1176 516l4.9 -5.8M1071 647l-3.3 3.9M1105 545l-1.0 -5.1M1126 569l-0.2 -4.0M1110 547l-0.1 -5.3M991 521l-3.5 -2.2M1095 585l2.1 -4.2M1036 654l-6.3 3.7M1013 673l-5.5 3.7M962 592l-7.4 -0.3M1197 697l5.7 7.6M1079 696l0.1 5.7M1154 688l5.3 5.7M1072 617l-6.4 0.1M1187 668l4.5 3.3M1018 648l-8.1 0.5M1150 667l4.0 4.8M1212 691l5.1 2.5M1015 688l-7.3 -0.5M1177 505l-0.1 -6.7M1103 588l0.5 -2.7M1104 655l-2.1 6.9M1094 516l-1.8 -7.8M1218 685l8.5 5.0M1050 491l-2.3 -7.0M1147 673l7.3 2.9M1159 671l4.3 6.8M1096 605l-0.4 -2.9M1098 572l0.5 -3.6M1231 684l8.1 0.8M1110 506l-0.6 -7.9M1170 453l2.2 -4.5M1158 695l4.0 9.0M1108 710l-1.7 7.2M1177 511l1.1 -6.5M1257 560l7.8 1.3M1071 472l-1.4 -5.5M1178 686l4.4 5.1M1091 554l-1.7 -6.2M1253 622l7.2 0.3M1117 613l0.5 -4.4M1182 488l1.9 -5.0"/>
<path stroke="#b3987a" d="M1031 671l-6.0 1.0M1163 651l9.5 0.4M1081 650l-7.3 4.3M1095 655l-4.1 6.5M1117 673l0.4 6.5M1026 694l-6.6 4.3M1035 672l-9.3 2.5M1231 631l4.5 0.9M1025 689l-5.3 3.1M1143 665l6.4 5.4M997 667l-5.5 4.7M1107 644l-0.4 2.6M1147 621l4.0 -0.8M967 523l-4.0 -3.0M1164 688l2.5 7.1M1187 695l6.5 3.6M1043 522l-3.1 -3.7M1235 683l8.2 3.6M1092 584l-0.5 -4.8M1132 559l3.0 -2.8M1249 538l3.7 -4.2M1236 535l2.9 -6.9M998 666l-7.4 4.5M1069 495l-0.9 -4.4M1200 684l7.4 3.9M1175 510l0.1 -5.1M1119 540l-0.5 -6.0M1077 547l-2.4 -3.4M1168 685l4.0 3.5M1156 521l2.3 -6.3M1017 653l-8.4 -2.1M1122 576l0.5 -2.9M1244 673l6.4 4.5M1102 465l-0.3 -5.4M1121 644l2.3 3.2M1166 669l8.2 4.0M1136 557l2.8 -4.6M1075 674l-2.2 5.9M999 675l-9.9 1.4M1145 697l1.6 5.0M1077 710l-2.3 5.0M1063 677l-6.8 6.2M1186 682l4.5 8.5M1098 545l-0.0 -4.0M1237 641l7.0 0.5M1135 552l1.3 -6.1M968 607l-7.3 -0.2M1108 627l-1.1 -4.4M1171 683l4.8 4.0M1051 699l-4.4 5.6M1119 507l-0.9 -5.7M1261 536l5.1 -4.9M1078 609l-4.4 -1.9M1114 546l-2.0 -3.8M1170 634l6.1 0.3M953 577l-7.7 -1.9M997 671l-5.5 1.1M1155 686l6.1 6.1M1147 611l4.5 0.5M1043 661l-5.0 3.3M1177 656l8.0 3.7M1104 606l-0.5 -3.2M1190 526l3.4 -5.8M1080 644l-6.9 5.3M1034 672l-6.3 5.0M1074 638l-3.9 1.8M1063 658l-6.6 6.8M1130 607l1.1 -2.5M1125 589l0.8 -3.6M1088 647l-2.4 3.7M1146 685l4.8 7.1M1131 562l-0.1 -3.5M1186 656l8.9 1.5M1207 648l6.9 3.0M1134 553l0.2 -6.9M1117 647l0.0 5.0M1102 575l-1.1 -4.0M953 529l-3.0 -4.9M1173 496l2.5 -5.4M1153 665l4.3 4.0M1179 701l4.4 4.2M1072 615l-4.1 -0.9M1247 538l2.0 -5.2M1086 665l1.4 8.8M1174 507l1.2 -5.7M1076 605l-4.3 -2.0M1183 672l4.3 4.2M1196 680l7.0 2.2M1038 659l-6.5 1.3M1196 695l5.5 1.9M1199 510l0.7 -4.7M1109 708l-0.1 5.9M1241 540l3.3 -3.0M953 540l-6.7 -3.2M1176 494l2.4 -6.0M1265 563l6.2 -1.8M1143 551l4.2 -4.8M1175 457l1.3 -4.2M1029 671l-6.6 0.6M1238 626l5.5 1.5M1093 562l-0.2 -4.9M1088 563l-0.4 -3.6M1056 503l-3.6 -6.9M1050 494l-2.3 -5.9M1110 652l0.8 6.1M1088 636l0.8 -2.9M1010 646l-5.4 2.7M1095 575l0.8 -4.6M1143 539l1.6 -4.5M1040 695l-6.1 4.8M1158 655l5.9 5.2M1084 621l-4.6 0.1M1112 568l0.8 -2.6M1018 528l-1.9 -4.9M1186 534l-1.0 -5.7M1177 678l4.5 2.3M1181 534l1.3 -7.8M1043 705l-5.3 2.0M1162 482l2.8 -7.0M1182 691l4.0 4.0M1094 665l-2.0 6.7M1134 486l0.5 -6.8M1010 531l-3.4 -5.3M1058 635l-5.0 0.5M1249 545l5.8 -4.4M1058 676l-6.8 5.8M982 532l-3.8 -4.0M1043 642l-7.1 1.7M1202 658l8.7 2.8M1052 627l-5.6 0.3M1155 639l6.8 4.1M1058 643l-6.8 3.5M1058 623l-4.3 2.8M1085 586l-4.4 -2.0M1107 552l0.7 -6.6M1095 517l0.7 -7.9M1133 705l3.2 4.0M1035 688l-5.5 7.2M1141 485l0.6 -6.9M1201 649l6.7 3.7M1111 583l0.3 -4.4M1262 597l6.8 -3.2M1017 688l-7.3 4.6M1119 689l0.8 5.9M1143 553l4.1 -3.6M1113 581l0.5 -3.8M1143 617l7.3 -0.7M1170 655l6.4 2.4M1109 591l1.0 -4.6M1056 635l-6.4 4.1M1063 499l-2.8 -6.4M1060 658l-6.5 7.1M1075 673l-6.8 6.8M1233 677l5.1 1.3M1011 651l-6.0 3.1M1082 669l-3.9 9.0M1195 654l5.9 3.3M1264 544l2.9 -3.1M1126 650l1.7 2.8M1027 636l-4.0 1.2M1104 661l0.5 5.0M1106 677l-2.5 6.7M988 668l-7.0 0.6M1100 612l0.2 -3.2M1123 552l0.7 -6.4M1078 641l-7.4 3.3M1187 501l1.2 -4.7M1031 639l-6.8 0.6M1089 676l-2.8 6.7M1236 544l1.9 -3.8M1192 638l5.9 1.0M1009 680l-7.4 5.8M1193 684l4.7 3.1M1117 673l5.0 8.2M1147 651l5.6 3.0M1146 675l6.4 5.3M1100 571l0.6 -4.8M1254 620l7.5 1.6M1232 686l5.2 2.5M1228 545l5.4 -2.0M1174 499l5.0 -5.7M1107 677l-2.1 8.6M1224 645l5.4 2.1M1151 678l4.1 5.5M1042 673l-5.9 2.9M1086 592l0.4 -3.2M1104 547l1.3 -5.3M1098 611l-0.2 -4.6M1167 644l5.9 3.1M1218 687l7.6 4.6M1192 642l6.4 0.2M960 575l-3.8 -1.5M1125 562l0.1 -2.5M1006 653l-8.5 1.9M1136 688l6.5 6.6M1266 558l6.1 -1.0M1089 657l-2.3 4.9M1114 686l-1.8 5.2M1096 642l-2.3 3.7M1038 674l-4.2 3.1M1252 626l5.8 0.2M1008 644l-7.0 6.4M1109 693l-0.2 8.2M1131 616l-0.2 -2.9M1069 616l-6.5 -1.3M1188 532l-1.4 -7.6M1114 689l-3.9 6.9M1052 627l-7.8 0.7M1109 595l-0.7 -4.0M1136 627l4.0 3.3M1045 706l-4.2 4.6M1024 661l-7.9 3.8M1051 506l-1.5 -6.6M1134 563l1.7 -6.6M1136 647l7.4 1.7M1149 531l0.5 -5.4M1112 555l0.6 -6.4M1168 691l4.1 4.4M1093 603l-0.3 -3.4M1005 669l-5.3 0.9M1073 648l-5.9 6.6M1054 700l-3.3 5.6M1266 558l7.1 -1.3M1157 667l6.4 5.4M1020 669l-5.3 2.8M1113 519l-0.1 -4.6M1078 668l-4.2 6.0M1049 706l-3.1 7.1M1036 678l-3.7 3.4M1243 670l8.1 2.3M1038 654l-5.9 4.0M1121 660l5.8 7.7M1164 656l5.1 3.1M1172 460l1.7 -5.7M1176 648l7.0 1.6M1064 495l-3.8 -4.3M1169 688l4.0 4.1M1008 683l-6.2 3.7M1021 676l-5.9 2.1M1253 661l7.0 2.7M1121 511l0.2 -5.0M985 647l-6.6 2.7M1176 641l5.3 1.1M1242 655l7.3 4.8M1110 596l-0.8 -4.8M1165 643l7.3 2.2M1018 530l0.2 -4.5M1108 661l3.0 5.3M1118 652l1.7 7.6M1236 677l5.5 2.8M1088 655l-3.0 4.7M1059 696l-3.8 5.7M1048 705l-8.3 5.2M1140 549l-0.2 -6.1M958 563l-6.4 -0.8M1020 648l-7.8 0.5M1090 608l0.6 -3.5M1177 653l4.4 4.3M1048 685l-5.2 2.4M1184 486l1.4 -4.2M1187 704l7.1 3.6M1129 598l-0.0 -2.6M1134 682l2.8 7.7M1148 549l3.4 -4.5M1200 646l4.3 3.2M1074 661l-9.4 3.3M1235 672l5.3 3.3M1147 649l8.9 1.6M1104 675l-2.0 7.2M1067 651l-9.3 3.5M1249 661l9.6 1.9M1187 524l1.2 -6.2M1148 633l7.9 1.2M1028 677l-3.7 4.9M1245 553l3.0 -2.9M1158 699l3.6 3.8M1035 522l-1.3 -4.4M966 642l-6.3 4.7M958 539l-5.0 -5.0M1129 555l1.1 -4.9M1150 663l6.1 3.0M1106 565l-0.3 -4.1M1162 500l0.9 -6.2M1044 697l-7.0 6.9M1092 495l-2.9 -6.0M1267 537l4.1 -3.8M1025 650l-5.3 1.2M1069 674l-3.3 5.2M1113 689l-0.4 5.6M1058 456l-1.0 -6.0M1067 684l-3.2 4.9M1122 647l3.4 3.0M1140 657l3.3 4.8M961 604l-4.9 -0.8M958 542l-4.1 -2.3M978 628l-4.9 1.2M1141 613l7.3 0.7M1123 611l-0.5 -4.0M1230 682l7.1 4.6M1146 697l1.9 5.3M1142 543l0.3 -4.3M1147 653l8.0 4.2M1118 541l-1.0 -6.7M1177 517l3.8 -5.4M1185 644l8.5 -0.6M1257 580l4.1 -1.8M1158 660l5.6 6.9M1103 466l1.6 -7.0M1039 655l-6.4 1.6M1035 511l-4.0 -3.9M1265 569l3.8 -2.3M1153 705l3.8 4.8M1087 579l-0.6 -3.2M1185 692l6.6 1.0M976 529l-3.3 -3.5M1072 615l-6.8 -0.1M1098 669l-1.5 5.0M1108 649l0.3 3.6M1012 653l-8.1 4.8M1071 690l-2.6 8.7M1153 617l6.8 -1.2M959 594l-5.7 0.8M1076 520l0.7 -4.4M1096 468l3.6 -6.9M1132 665l2.7 4.7M1245 543l4.3 -3.1M1014 525l-2.1 -4.0M1144 604l4.5 -1.5M1100 561l-1.7 -3.7"/>
<path stroke="#f4efe8" d="M1090 717l-0.1 6.5M1119 650l0.2 6.4M1091 710l-0.8 6.4M1063 490l-0.2 -4.3M1068 710l-4.1 7.8M1119 712l-0.5 9.0M1121 696l-0.4 7.6M1018 657l-6.8 2.1M1146 545l3.5 -5.8M1101 675l-1.0 5.4M1101 720l0.7 6.0M1125 695l1.9 8.2M1120 695l3.0 8.8M1067 501l-1.7 -7.8M1043 701l-6.8 6.4M1010 658l-5.8 1.8M1164 638l5.4 0.6M1066 710l-6.1 7.5M1093 708l-3.3 7.6M1030 681l-6.9 2.5M1092 706l-3.3 5.8M1254 547l4.8 -2.6M1109 559l-2.1 -7.1M1093 706l-1.3 7.5M1065 648l-6.6 3.6M1091 709l-2.0 8.9M1110 723l-0.2 9.1M1080 658l-2.9 4.5M1097 709l-1.7 8.0M1071 702l-6.6 5.1M1107 704l1.4 7.3M1138 465l-2.4 -4.7M1071 646l-4.1 3.5M1075 689l-3.4 7.3M1245 676l4.7 3.1M1164 706l4.4 4.4M1016 659l-8.8 1.7M1276 535l3.9 -2.9M1197 655l8.6 1.3M1164 698l3.8 4.6M1082 685l-3.6 7.6M972 617l-4.5 1.1M1031 519l-0.0 -7.0M1160 492l2.8 -4.3M1107 708l-1.6 7.8M1049 478l-1.6 -4.2M1153 716l2.0 7.1M1101 680l-1.3 9.7M1146 721l4.1 4.9M1127 597l0.0 -3.8M1097 703l-1.1 9.8M1078 542l-0.9 -6.9M1042 667l-8.8 2.9M1158 707l9.3 3.4M1154 683l4.4 4.0M1014 644l-5.1 2.1M1094 694l-2.4 5.9M1153 662l6.4 4.8M1093 545l-1.4 -7.2M963 623l-6.8 -1.3M1156 716l5.6 5.7M1094 707l-1.5 4.9M1148 713l3.6 8.9M1051 701l-3.9 6.4M1142 714l1.2 6.8M1106 713l-0.2 6.3M1139 459l-0.6 -5.2M1076 704l-3.5 3.8M1160 490l3.6 -7.0M1182 639l6.3 0.3M1125 710l3.5 7.4M1153 715l4.3 7.1M1130 694l1.5 8.3M1094 536l-1.6 -6.4M1084 679l-2.5 4.7M1121 658l0.6 7.7M1119 709l3.0 5.3M1243 622l6.9 -3.2M1089 724l-2.0 4.9M1108 710l0.6 6.4M1084 703l-0.9 5.9M1137 681l3.1 4.0M1184 689l6.3 4.9M1084 581l-5.5 -2.6M1184 684l5.5 4.5M1179 650l5.1 4.0M1130 642l3.2 2.4M1109 693l0.1 7.9M1169 688l4.3 8.3M1104 558l-1.1 -4.3M1120 707l0.2 9.5M1017 652l-6.5 0.2M1235 659l7.5 -0.4M1072 708l-3.3 6.1M1158 703l3.3 7.0M1107 593l0.4 -4.7M1088 702l-3.0 5.9M1118 709l0.9 6.2M1252 542l1.9 -3.6M1141 719l1.2 8.2M1251 552l4.6 -0.9M1109 696l-0.1 7.9M1155 712l2.6 5.6M1107 724l-1.7 8.6M1138 725l2.6 5.1M1052 707l-4.9 7.4M1142 714l1.7 6.2M1103 717l1.1 8.3M1109 565l-1.2 -4.6M1141 681l4.2 7.2M1087 714l-3.2 6.0M1094 515l-0.5 -5.2M1129 722l-1.8 8.0M1090 717l-4.4 8.4M1206 656l8.8 2.7M1064 709l-4.3 6.8M1099 673l-2.6 7.6M1166 707l7.3 6.7M1156 704l5.8 7.6M1067 716l-3.0 4.7M1121 722l-2.0 8.2M1121 649l1.1 3.4M1145 709l-0.6 9.7M1038 516l-3.9 -5.8M1059 702l-4.4 6.9M1044 692l-6.9 0.5M1141 702l1.4 8.4M1079 628l-4.8 1.2M1099 695l-1.0 6.0"/>
<path stroke="#ebe3d8" d="M1103 701l-1.0 8.5M1103 676l-0.3 9.9M1157 700l2.2 4.9M1174 697l4.8 2.7M1101 589l0.2 -4.5M1092 642l-3.4 3.3M1139 714l5.4 5.1M1100 710l-0.3 9.4M1133 712l2.9 6.5M1032 693l-9.3 3.2M960 547l-4.7 0.5M1046 647l-5.1 2.7M1078 716l-4.1 4.2M1140 687l3.9 8.5M1161 643l4.2 4.5M1181 640l5.7 3.8M1140 602l6.0 -2.2M1073 707l-1.7 5.8M1102 704l-3.1 8.9M1129 644l2.8 3.3M1103 707l1.4 6.5M1031 645l-7.6 2.0M1117 726l-0.1 6.8M1094 710l-2.8 5.9M1143 610l4.7 -1.9M1153 705l3.3 4.9M1112 684l3.4 7.8M1236 639l7.2 0.3M1221 529l5.7 -4.8M1098 712l-4.3 5.3M1173 482l3.1 -5.7M1169 636l4.8 0.0M1074 713l-5.3 7.7M1125 720l2.1 6.0M1121 692l0.6 7.4M1070 712l-3.5 5.6M1097 679l-1.5 6.3M1139 606l5.0 -3.8M1008 642l-8.9 1.6M1158 622l6.7 0.3M1103 699l-1.1 9.8M1086 699l-5.3 6.1M1145 701l0.3 5.7M1083 696l-2.7 5.1M979 520l-4.9 -4.8M1145 543l-0.4 -5.5M1255 593l7.2 -0.5M1134 717l3.0 6.2M1083 717l-1.8 5.4M1138 706l3.0 5.6M1088 722l-2.6 7.5M1171 655l4.3 3.9M1185 697l6.4 2.9M1121 678l2.3 8.9M1247 549l5.2 -3.3M1259 583l3.7 -1.8M1140 714l4.1 6.3M1155 717l2.3 5.4M1148 716l1.5 8.4M1078 715l0.3 9.0M1041 678l-7.2 3.5M1219 645l8.6 3.5M1122 645l2.6 4.0M1070 651l-4.4 4.6M1064 703l-2.8 5.2M1041 699l-6.3 6.5M1002 640l-5.9 0.9M1145 721l3.5 6.3M1074 510l0.7 -6.6M1100 712l-0.7 6.9M1064 674l-6.5 2.8M1216 688l6.5 2.0M1132 723l0.3 7.8M1106 710l-3.3 9.1M1122 720l0.5 8.3M1131 709l-0.4 5.1M1102 710l1.4 7.1M1065 663l-5.9 4.5M952 533l-4.2 -4.2M1122 701l0.7 5.4M1159 703l6.4 4.7M1107 566l1.0 -2.3M1243 623l4.3 -0.6M1162 627l4.1 -0.4M1163 708l2.4 5.8M1060 490l-0.5 -4.8M1197 643l7.0 2.7M1214 645l6.3 3.2M1075 712l-4.7 6.4M1053 707l-3.8 7.1M1147 714l3.3 7.9M1156 690l5.2 4.4M1237 636l5.5 1.6M1071 628l-5.9 2.0M1093 702l-0.7 8.6M1083 647l-3.9 4.8M1113 538l-0.8 -6.5M1175 673l6.2 5.9M1178 691l6.6 5.9M1084 711l-3.0 7.1M1119 652l0.3 6.5M1082 712l0.7 7.4M1164 710l4.2 5.1M1199 661l8.1 4.4M1133 572l1.4 -6.9M1083 719l-4.4 5.3M1121 695l3.9 7.9M1112 684l-1.8 9.6M1086 586l-1.0 -4.7M1146 656l4.1 4.8M1099 635l0.1 -4.8M1099 636l-0.1 -2.7M1108 693l0.1 8.0M1097 468l0.4 -4.9M1128 722l5.4 8.0M1107 690l-0.7 7.3M1111 697l-0.9 5.5M952 566l-3.9 -1.0M1117 671l2.9 6.6M1146 704l4.3 7.2M1122 699l1.5 6.5M1108 494l-0.6 -6.5M1097 706l1.2 6.6M1131 589l-0.5 -4.1"/>
<path stroke="#5f4c3e" d="M1018 652l-7.7 3.6M1101 614l0.6 -3.0M1057 636l-6.7 -3.2M1109 621l-0.8 -3.2M1152 649l6.8 4.2M1090 538l0.8 -5.4M1094 475l-1.4 -6.0M1129 554l-0.4 -5.3M1097 666l-1.8 5.5M1230 539l3.6 -5.9M1096 556l-2.6 -4.7M999 524l-2.0 -4.8M1140 619l4.3 0.4M1053 648l-7.0 6.0M1064 451l-4.2 -5.1M960 605l-4.1 1.1M1186 677l4.6 3.4M1022 644l-8.7 2.7M1111 567l-0.4 -3.3M1123 624l-0.6 -2.6M1245 535l3.6 -3.0M1165 662l6.2 5.9M1080 634l-3.5 2.9M1137 488l0.5 -6.6M1158 698l4.9 7.3M1150 667l4.4 3.5M1103 557l-1.7 -3.7M1179 701l3.5 5.2M960 623l-6.1 -0.3M1131 656l1.9 5.0M1119 677l2.5 7.0M1044 653l-7.7 0.6M972 520l-2.8 -5.7M962 628l-5.7 -0.2M1069 691l-2.3 6.0M973 614l-4.8 0.2M1069 621l-5.1 1.9M1098 485l0.4 -6.9M1173 518l2.4 -4.0M1260 624l4.3 -1.3M968 609l-4.7 -1.0M1220 647l5.5 0.8M1188 490l2.6 -3.6M1082 624l-4.5 1.1M962 547l-6.9 -1.2M1059 507l-1.8 -6.6M1105 571l-0.6 -4.6M1242 670l5.5 4.4M1148 674l4.5 4.5M1128 607l0.7 -4.4M1010 677l-7.6 3.3M1169 517l0.5 -6.8M1093 536l0.0 -7.6M1105 686l2.5 5.5M1072 640l-4.7 3.8M1103 599l-0.0 -2.9M985 635l-7.2 1.1M1170 671l6.0 5.5M966 527l-4.4 -5.4M983 666l-6.2 1.9M1138 655l2.9 5.5M1158 641l8.0 4.7M1098 555l0.2 -7.6M1179 656l9.2 2.4M962 569l-5.9 -1.4M1047 491l-2.1 -7.1M1127 468l2.4 -6.8M1241 642l8.6 2.0M1103 670l-0.7 7.0M1180 658l5.8 2.4M1139 634l6.5 1.5M1161 696l3.4 4.0M975 664l-6.3 3.3M1097 574l0.6 -2.5M1050 527l-1.2 -5.5M1053 469l-4.4 -5.2M1111 530l1.9 -7.0M954 560l-4.4 -1.4M1063 630l-4.4 0.0M1113 688l2.5 8.9M1097 688l-1.7 6.2M1087 496l-0.0 -5.4M1160 524l0.6 -4.2M1236 658l5.7 1.9M1200 651l9.3 3.2M1137 591l4.1 -4.8M1149 660l7.4 3.5M959 580l-4.6 -2.0M1078 547l-3.0 -5.3M1238 543l4.3 -4.2M1222 531l1.8 -4.1M1086 609l-0.2 -4.3M1157 659l4.7 4.3M949 529l-2.8 -3.8M1001 672l-5.4 2.4M1162 644l5.6 3.7M1061 624l-7.3 2.5M1135 570l2.5 -3.7M1142 596l6.5 -1.9M1079 613l-7.1 -1.3M1114 607l0.0 -3.6M1105 601l-0.4 -2.7M1089 645l-2.4 1.9M1136 676l1.8 9.0M1105 661l-2.4 9.3M1071 451l-2.6 -4.9M1033 640l-7.0 2.5M965 652l-5.8 1.7M980 631l-7.8 0.8M1133 578l3.6 -5.0M1090 604l-0.5 -3.5M1049 648l-7.9 0.9M1057 514l-3.2 -5.1M970 610l-6.1 -0.8M1142 641l4.8 4.3M1039 654l-8.8 3.5M1066 478l-0.0 -5.8M1046 534l-3.8 -5.8M1014 672l-7.3 5.5M1124 615l-0.6 -4.0M1135 557l2.7 -6.5M1116 621l-0.2 -2.6M1054 645l-7.6 2.5M1193 693l5.2 4.1M1266 536l2.5 -6.5M1258 627l5.1 1.3M1180 482l3.5 -6.8M1138 500l1.0 -7.4M1094 536l-1.1 -5.8M1123 452l0.3 -4.2M1153 467l3.9 -6.6M1077 451l-1.8 -4.5M1195 677l5.7 5.4M1110 571l-1.3 -4.5M1199 674l5.9 2.9M981 531l-4.0 -2.7M1145 463l-0.3 -6.2M1138 503l0.3 -5.1M1088 542l-0.1 -4.3M1105 660l1.6 6.3M1103 474l0.5 -5.0M1140 682l3.6 6.4M958 608l-5.2 0.7M1127 587l1.4 -3.2M1203 695l5.7 1.6M1093 581l0.0 -3.0M1074 649l-6.0 4.1M1089 462l-0.5 -6.1M1093 456l-2.3 -7.1M1092 566l-1.4 -4.0M1118 454l-1.0 -6.8M1175 540l0.5 -6.4M1100 619l-2.2 -3.7M1184 682l4.2 5.1M1243 660l5.2 1.2M1086 662l-4.9 4.2M1046 520l-2.6 -5.5M1087 477l0.2 -5.0M1185 693l5.2 5.7M1133 459l0.0 -4.8M1225 545l5.7 -2.4M1182 530l2.0 -5.5M1123 498l1.5 -4.8M1233 665l6.7 4.0M1114 558l-0.3 -7.8M957 543l-3.4 -2.8M1162 685l7.3 5.5M1126 604l-0.2 -2.7M1251 632l5.7 0.7M1125 478l1.1 -4.7M1200 528l3.6 -6.7M1130 656l5.5 5.3M1096 606l0.8 -3.4M956 556l-3.7 -2.4M984 527l-4.9 -3.3M977 665l-7.1 0.7M1113 579l-0.3 -2.7M964 640l-7.2 -0.2M958 590l-5.7 0.1M1148 670l3.5 5.9M1126 460l-0.8 -5.0M1199 525l2.4 -6.1M1146 619l7.5 -0.9M1130 616l-0.9 -4.0M1258 555l4.0 -1.2M1139 453l1.7 -6.9M1118 593l-0.3 -4.2M1259 561l5.5 -4.4M1132 598l7.9 -0.5M994 630l-6.2 0.1M1086 492l-0.5 -5.9M1248 624l7.7 0.0M1095 508l0.1 -6.4M1118 657l3.0 8.3M1084 486l2.6 -6.7M1105 682l-1.1 8.9M1116 584l-1.8 -3.1M1168 509l0.0 -4.2M1131 674l0.6 5.4M1174 467l0.9 -5.1M1045 528l-1.4 -6.3M968 614l-5.8 1.7M1202 639l5.8 1.6M1029 688l-6.7 3.6M1115 551l-1.7 -6.2M1122 608l-1.4 -2.4M1114 612l-0.9 -3.6M1255 658l9.1 -1.0M1226 544l3.8 -5.9M1081 450l-1.3 -4.2M1179 696l6.5 4.2M1113 595l0.1 -2.6M1233 540l3.1 -5.4M1154 626l4.6 1.1M1007 684l-6.2 2.9M1139 595l5.4 -4.4M1119 509l1.9 -5.3"/>
</g>
<g id="earstrands" fill="none" stroke-width="1" stroke-linecap="round" opacity=".9">
<path stroke="#e2d0b6" d="M1044 495Q1024 523 995 539M1054 479Q1040 502 1016 512M1000 402Q997 414 984 413M1052 469Q1043 487 1024 492M1043 460Q1035 477 1017 481M1003 402Q1002 413 990 411M1022 426Q1016 442 1001 445M1038 453Q1037 467 1027 468M989 397Q978 412 958 414M1034 444Q1029 459 1014 462M1044 487Q1025 515 997 531M1047 463Q1040 481 1023 486M1002 406Q998 417 984 416M1049 483Q1042 500 1026 504M1012 417Q1002 437 983 445M1037 449Q1027 471 1008 480M987 394Q982 407 968 407M995 400Q991 414 977 416M1002 408Q993 424 974 428M1011 411Q999 429 977 436M988 389Q980 403 962 403M990 387Q979 403 959 408M1046 481Q1040 497 1025 501M1050 472Q1041 486 1022 488M1004 412Q997 424 980 423M1002 410Q992 428 972 434M1009 416Q1006 431 993 434M1004 412Q999 426 985 428M1047 473Q1029 498 1001 510M1040 456Q1030 474 1011 480M1009 417Q1008 428 998 427M1000 402Q991 420 973 426M991 387Q982 401 963 403M1041 494Q1035 511 1019 515M1046 484Q1036 500 1017 503M1196 501Q1229 529 1253 544M1210 446Q1231 468 1243 477M1193 482Q1213 501 1223 508M1193 495Q1214 513 1227 519M1208 453Q1223 468 1229 471M1220 431Q1234 439 1238 435M1252 398Q1265 409 1267 408M1196 465Q1218 482 1229 486M1194 487Q1222 510 1241 520M1196 477Q1219 497 1232 505M1199 468Q1215 482 1221 484M1231 421Q1245 433 1249 434M1206 459Q1223 474 1230 475M1211 443Q1229 456 1237 456M1228 422Q1243 433 1248 432M1216 433Q1231 446 1237 446M1207 450Q1229 469 1240 476M1241 414Q1257 426 1263 424M1212 448Q1233 465 1243 470M1252 394Q1261 403 1261 399M1240 409Q1254 419 1260 417M1229 426Q1242 439 1245 440M1212 443Q1233 465 1244 475M1199 469Q1221 490 1235 498M1210 453Q1234 474 1249 483M1215 438Q1228 453 1233 455M1201 500Q1219 512 1226 511M1231 417Q1254 434 1268 437M1195 485Q1224 507 1243 516M1249 400Q1257 408 1257 404"/>
<path stroke="#75604c" d="M1048 461Q1041 474 1025 475M1016 421Q1013 437 1001 440M1051 480Q1044 495 1027 497M1039 449Q1024 470 999 478M1022 425Q1012 443 992 448M1045 483Q1025 507 996 519M1037 447Q1024 469 1001 479M990 400Q992 411 983 410M1253 390Q1268 402 1273 401M1196 488Q1225 512 1244 525M1195 500Q1220 522 1236 532M1241 407Q1259 422 1268 425M1195 468Q1219 489 1235 498M1197 492Q1217 508 1226 512M1232 411Q1250 429 1259 435"/>
<path stroke="#b3987a" d="M1048 476Q1031 501 1004 514M1046 492Q1035 509 1014 514M1047 467Q1037 483 1018 487M1046 454Q1031 475 1007 482M1034 441Q1018 461 992 470M1001 409Q989 426 968 431M1014 424Q1008 436 993 436M1045 483Q1036 496 1018 498M993 394Q986 411 970 415M985 386Q979 401 963 404M1043 450Q1037 464 1020 465M1037 445Q1034 461 1021 465M988 385Q983 400 968 402M1006 406Q995 425 975 432M1047 471Q1031 493 1004 502M1042 491Q1025 516 998 528M1048 486Q1042 500 1028 502M1032 445Q1015 465 989 473M1005 415Q999 429 983 430M1024 439Q1015 453 995 456M1044 487Q1032 505 1010 510M1025 427Q1020 441 1005 442M1050 467Q1033 485 1006 491M1051 475Q1047 493 1033 498M1048 470Q1036 487 1015 491M1045 461Q1036 476 1017 479M1215 435Q1234 454 1244 460M1220 439Q1237 452 1244 452M1248 402Q1260 413 1262 411M1194 490Q1215 507 1226 512M1209 448Q1224 464 1229 468M1193 487Q1221 509 1239 518M1209 444Q1223 456 1227 457M1230 416Q1249 432 1259 435M1204 452Q1230 474 1247 483M1242 406Q1255 419 1258 419M1218 437Q1241 454 1255 460M1196 489Q1217 510 1227 518M1193 485Q1208 497 1214 497M1196 478Q1218 496 1230 501M1194 478Q1220 500 1237 510M1194 501Q1210 517 1217 521M1211 448Q1232 466 1243 471M1194 485Q1217 505 1229 513M1246 403Q1260 419 1265 424M1209 451Q1223 465 1228 466M1191 490Q1209 506 1218 511M1239 403Q1257 418 1264 420"/>
<path stroke="#c4a98a" d="M1028 440Q1014 459 990 466M1041 452Q1022 476 994 487M1050 472Q1042 484 1025 484M1033 442Q1030 452 1018 449M1044 467Q1035 483 1016 487M1049 479Q1029 503 1001 514M1009 412Q1004 425 989 426M1044 493Q1027 518 1001 531M987 391Q986 405 975 406M1032 443Q1027 460 1012 464M1051 489Q1043 508 1026 515M1051 475Q1044 490 1028 494M1035 444Q1032 456 1019 456M1032 437Q1028 449 1015 449M1037 450Q1028 465 1010 467M1048 459Q1036 476 1015 480M1028 437Q1012 456 987 464M1045 464Q1027 486 999 496M1044 455Q1029 474 1005 480M1049 464Q1033 483 1006 491M1217 438Q1240 456 1254 461M1213 444Q1225 454 1229 451M1203 455Q1222 470 1231 472M1196 489Q1216 512 1226 522M1227 422Q1239 436 1242 437M1225 432Q1249 453 1263 462M1215 445Q1227 458 1230 459M1232 416Q1244 429 1246 428M1202 464Q1219 481 1227 485M1205 461Q1222 475 1229 478M1201 455Q1223 477 1235 487M1207 448Q1223 465 1230 469M1213 441Q1235 458 1248 463M1200 495Q1229 522 1249 536M1244 404Q1256 415 1258 413M1203 452Q1220 468 1227 471M1193 496Q1223 519 1243 530M1192 495Q1214 514 1226 520M1201 467Q1220 484 1230 489M1198 478Q1210 491 1213 492M1194 469Q1222 492 1240 503M1215 440Q1239 460 1254 469M1190 487Q1208 505 1215 510M1247 404Q1261 416 1267 415"/>
<path stroke="#ffffff" d="M1044 465Q1032 482 1010 487M999 404Q994 418 980 419M1049 494Q1036 510 1014 514M1032 439Q1017 459 993 466M996 398Q993 411 980 412M1049 471Q1032 491 1004 499M983 384Q980 394 967 391M1035 452Q1019 474 992 482M990 388Q986 400 973 400M1053 476Q1043 494 1024 499M1047 481Q1035 501 1013 508M1051 488Q1031 510 1000 519M1048 471Q1036 488 1014 493M1011 420Q1008 433 996 434M1046 478Q1030 502 1005 514M1006 415Q998 432 980 436M1050 484Q1036 502 1011 508M1036 445Q1021 465 997 473M1195 478Q1212 498 1220 506M1198 467Q1223 489 1239 499M1195 478Q1214 492 1224 493M1201 470Q1219 488 1227 493M1216 431Q1233 446 1240 450M1190 482Q1211 503 1223 511M1205 453Q1229 476 1243 486M1209 450Q1224 462 1228 462M1191 485Q1206 499 1212 500M1201 461Q1222 481 1233 487"/>
<path stroke="#d6bd9f" d="M1050 471Q1035 491 1011 500M1042 461Q1035 476 1017 480M1018 433Q1011 450 995 454M1021 431Q1016 446 1002 449M1005 415Q996 430 977 432M1017 428Q1003 445 980 448M1009 412Q1008 426 998 428M1007 409Q997 426 978 430M1043 457Q1035 476 1018 482M1008 415Q1004 430 991 433M990 394Q989 406 979 405M1027 444Q1014 462 990 468M1035 449Q1025 466 1006 470M1051 485Q1037 507 1013 517M1042 448Q1037 462 1021 463M1004 408Q998 424 982 429M1047 491Q1033 516 1010 528M1043 466Q1025 486 998 495M1050 484Q1038 504 1017 512M1045 490Q1027 511 1000 519M1195 475Q1207 489 1209 491M1236 411Q1255 425 1265 427M1245 402Q1264 418 1273 423M1196 489Q1222 509 1238 517M1206 446Q1226 465 1235 471M1231 417Q1245 428 1250 428M1190 478Q1218 501 1236 512M1225 426Q1241 445 1248 451M1193 470Q1207 488 1213 494M1200 454Q1218 470 1227 474M1198 485Q1221 502 1234 506M1193 487Q1212 502 1221 506M1252 393Q1269 411 1277 416M1200 494Q1224 515 1239 524M1193 488Q1217 508 1232 515M1231 427Q1250 445 1259 450M1197 469Q1210 481 1214 481M1198 464Q1209 474 1211 472M1253 391Q1268 404 1273 405M1250 396Q1266 412 1271 416M1198 488Q1224 510 1241 519M1198 467Q1210 481 1213 482M1250 395Q1262 409 1264 411M1197 501Q1220 521 1234 528M1210 446Q1229 461 1238 463M1209 444Q1231 466 1242 475M1200 459Q1225 479 1240 486M1213 450Q1238 470 1254 477"/>
<path stroke="#8c745b" d="M1051 474Q1031 501 1002 515M1048 485Q1027 512 996 526M1033 446Q1019 464 995 470M1039 453Q1027 473 1005 481M1045 494Q1034 511 1012 516M991 388Q989 400 977 399M1047 475Q1042 488 1027 488M1047 465Q1032 485 1008 494M1046 486Q1030 507 1004 515M1204 460Q1218 472 1222 472M1216 437Q1234 453 1242 456M1242 412Q1260 427 1268 429M1210 442Q1226 459 1233 463M1194 497Q1209 513 1215 517M1244 407Q1261 424 1268 428M1207 446Q1229 462 1242 465M1202 461Q1227 479 1243 484M1223 427Q1237 445 1242 449M1195 488Q1221 510 1237 520M1196 490Q1224 516 1243 530M1193 486Q1214 502 1226 505"/>
<path stroke="#f4efe8" d="M1049 484Q1035 505 1010 514M1043 462Q1026 482 1000 490M1045 489Q1027 512 1000 523M1004 412Q998 426 982 426M1041 447Q1025 464 999 469M1042 494Q1024 516 996 525M993 392Q986 410 969 415M1031 438Q1023 457 1005 464M1000 412Q994 424 978 423M1020 423Q1005 443 980 451M1046 465Q1035 486 1014 494M1213 444Q1234 463 1245 469M1196 467Q1218 483 1230 487M1229 418Q1240 433 1241 436M1190 485Q1217 509 1234 519M1200 470Q1227 491 1245 499M1201 495Q1228 517 1245 526M1192 486Q1211 507 1221 515M1197 470Q1222 493 1238 503M1247 400Q1258 415 1260 417M1201 457Q1223 479 1235 488M1226 426Q1244 445 1252 452M1218 439Q1234 451 1240 452M1194 479Q1214 497 1224 503M1223 426Q1237 437 1241 435"/>
<path stroke="#5f4c3e" d="M1007 421Q1000 433 984 432M1015 420Q1011 434 996 436M1045 465Q1036 478 1018 479M1025 439Q1023 448 1011 445M987 387Q985 399 974 399M986 386Q986 395 975 391M1030 444Q1021 460 1003 463M1046 486Q1034 507 1012 516M1216 433Q1232 450 1239 454M1198 461Q1216 479 1225 485M1224 430Q1235 440 1236 439M1196 489Q1212 505 1218 508M1196 480Q1218 499 1231 506M1233 418Q1249 432 1255 433M1243 409Q1260 424 1268 426M1249 404Q1266 420 1273 425"/>
<path stroke="#ebe3d8" d="M1045 466Q1036 487 1016 495M1045 467Q1036 481 1017 483M995 395Q991 404 977 401M990 389Q988 398 976 396M1017 418Q1015 431 1003 432M1021 431Q1011 448 991 453M1048 470Q1043 484 1027 485M1048 463Q1031 484 1004 493M1045 470Q1038 487 1022 493M1044 493Q1029 517 1004 528M1009 410Q999 429 978 436M1023 435Q1015 453 998 458M1027 431Q1019 447 1002 450M1004 402Q1001 417 989 419M1045 461Q1030 482 1004 490M1211 451Q1228 464 1235 465M1197 463Q1212 476 1218 476M1200 502Q1226 528 1242 542M1241 409Q1254 422 1258 423M1221 437Q1237 455 1242 460M1203 462Q1222 480 1232 486M1242 406Q1261 420 1271 422M1200 465Q1226 489 1242 500M1231 425Q1248 441 1256 444M1257 391Q1271 403 1275 404M1212 445Q1237 468 1252 478M1197 487Q1221 510 1236 520M1217 437Q1239 454 1252 458M1196 495Q1217 514 1228 520M1242 408Q1263 425 1275 430"/>
</g>
<g>
<g clip-path="url(#headclip)">
  <!-- forehead stripes -->
  <g stroke="#1c1415" fill="none" stroke-linecap="round" filter="url(#b1)" opacity=".8">
  <path d="M1081 460Q1075 484 1081 502T1088 528" stroke-width="10.500"/>
  <path d="M1151 462Q1153 486 1146 505T1137 530" stroke-width="10.500"/>
  <path d="M1063 508Q1064 520 1068 534" stroke-width="7"/>
  <path d="M1163 514Q1164 524 1162 537" stroke-width="7"/>
  <path d="M1103 482Q1100 505 1104 532M1126 484Q1128 505 1123 532" stroke-width="5.500" opacity=".8"/>
  <path d="M1112 470V500" stroke-width="5" opacity=".6"/>
  </g>
  <ellipse cx="1064" cy="674" rx="30" ry="15" fill="#dcc6a6" opacity=".6" filter="url(#b4)"/>
  <ellipse cx="1152" cy="674" rx="30" ry="15" fill="#dcc6a6" opacity=".6" filter="url(#b4)"/>
  <ellipse cx="1108" cy="600" rx="20" ry="28" fill="#c4a685" opacity=".55" filter="url(#b4)"/>
  <ellipse cx="1108" cy="632" rx="26" ry="14" fill="#7a5d49" opacity=".55" filter="url(#b4)"/>
  <ellipse cx="1108" cy="718" rx="54" ry="15" fill="#f8f5f0" opacity=".95" filter="url(#b4)"/>
  <path d="M1066 692Q1106 708 1146 692" stroke="#5d493b" stroke-width="3.500" fill="none" opacity=".75" filter="url(#b2)"/>
  <!-- whisker spots -->
  <g stroke="#1f1513" stroke-width="3.300" stroke-linecap="round" stroke-dasharray="4 4.500" fill="none" opacity=".9">
  <path d="M1028 652Q1048 651 1064 657M1036 667Q1052 669 1066 672M1040 679Q1052 681 1062 682"/>
  <path d="M1152 659Q1168 655 1188 657M1148 672Q1164 670 1180 672M1152 684Q1162 683 1172 682"/>
  </g>
  <g fill="#2b201c" opacity=".7" filter="url(#b2)">
  <ellipse cx="985" cy="640" rx="16" ry="6" transform="rotate(20 985 640)"/><ellipse cx="992" cy="656" rx="14" ry="5" transform="rotate(15 992 656)"/>
  <ellipse cx="1230" cy="652" rx="16" ry="6" transform="rotate(-20 1230 652)"/><ellipse cx="1222" cy="668" rx="14" ry="5" transform="rotate(-15 1222 668)"/>
  </g>
  <!-- nose -->
  <path d="M1081 655Q1084 644 1107 643.500T1133 655Q1134 665 1122 671L1107.500 683 1093 671Q1080 665 1081 655Z" fill="#3a2621" opacity=".9" filter="url(#b1)"/>
  <path d="M1085.500 653Q1090 647.500 1107 647T1129.500 653Q1129 660 1121 664.500L1107.500 675 1094 664.500Q1086 660 1085.500 653Z" fill="#d39a8b"/>
  <path d="M1088 651.500Q1094 648.500 1107 648.300T1127 651.500" stroke="#f0c4b8" stroke-width="1.600" fill="none" opacity=".8"/>
  <path d="M1092.500 664Q1097 671 1103.500 672.500M1122.500 664Q1118 671 1111.500 672.500" stroke="#2a1a17" stroke-width="3" stroke-linecap="round" fill="none" opacity=".85" filter="url(#b1)"/>
  <path d="M1107.500 676V691" stroke="#33221f" stroke-width="2.400" filter="url(#b1)"/>
  <path d="M1070 688.500Q1090 698 1107.500 691.500Q1125 698 1145 688.500" stroke="#4d3a2f" stroke-width="2.600" fill="none" opacity=".8" filter="url(#b1)"/>
</g>
</g>
  <!-- whiskers -->
  <g stroke="#f5f1ea" stroke-width="1.300" fill="none" opacity=".9">
  <path d="M1060 660Q1010 655 975 668M1062 668Q1015 672 985 690M1064 676Q1030 690 1005 705M1058 654Q1010 640 972 645M1062 672Q1020 680 990 698"/>
  <path d="M1156 662Q1205 655 1245 668M1154 670Q1200 674 1236 690M1152 678Q1185 690 1210 705M1158 656Q1205 642 1250 648M1154 674Q1195 682 1226 698"/>
  <path d="M1064 522Q1050 470 1000 392M1068 516Q1040 450 985 400M1158 524Q1180 450 1248 392M1166 528Q1190 470 1258 420" stroke-width="1" opacity=".85"/>
  </g>
<!-- glasses -->
<path d="M940.6 530.8C945.9 528.5 958.6 527.0 971.7 526.0C984.9 525.0 1003.6 523.8 1019.5 524.8C1035.4 525.8 1053.3 529.2 1067.3 532.0C1081.2 534.8 1092.6 540.1 1103.2 541.5C1113.8 542.9 1121.6 541.5 1131.0 540.3C1140.4 539.1 1149.0 535.5 1159.8 534.3C1170.6 533.1 1183.6 532.9 1195.6 533.1C1207.5 533.3 1218.0 533.7 1231.5 535.5C1245.0 537.3 1269.2 540.6 1276.9 543.9C1284.6 547.1 1277.5 551.4 1277.5 555.0C1277.5 558.6 1278.6 562.7 1276.9 565.4C1275.2 568.1 1269.3 567.0 1267.3 571.4C1265.3 575.8 1266.6 584.3 1265.0 591.7C1263.4 599.1 1261.4 608.8 1257.8 615.6C1254.2 622.4 1249.8 627.8 1243.4 632.4C1237.0 637.0 1227.5 640.9 1219.5 643.1C1211.5 645.3 1203.6 645.9 1195.6 645.5C1187.6 645.1 1179.3 644.1 1171.7 640.7C1164.1 637.3 1156.2 631.8 1150.2 625.2C1144.2 618.6 1139.6 608.5 1135.9 601.3C1132.2 594.1 1130.7 587.2 1128.0 582.0C1125.3 576.8 1123.3 572.7 1120.0 570.0C1116.7 567.3 1111.7 565.8 1108.0 566.0C1104.3 566.2 1101.2 566.7 1098.0 571.0C1094.8 575.3 1092.4 584.3 1088.9 591.7C1085.4 599.1 1082.1 608.8 1076.9 615.6C1071.7 622.4 1065.0 628.4 1057.8 632.4C1050.6 636.4 1042.3 638.5 1033.9 639.5C1025.5 640.5 1016.0 639.9 1007.6 638.3C999.2 636.7 990.5 633.8 983.7 630.0C976.9 626.2 971.3 622.0 966.9 615.6C962.5 609.2 959.8 600.1 957.4 591.7C955.0 583.3 955.3 571.8 952.6 565.0C949.9 558.2 943.2 555.3 941.1 551.1C939.0 546.9 939.9 543.4 939.8 540.0C939.7 536.6 935.3 533.1 940.6 530.8Z" fill="#f4411f"/>
<path d="M941.500 533Q975 527.500 1019.500 527Q1060 530 1103 543.500Q1131 542.500 1160 536.500Q1196 534.500 1231 537.500L1276 546" stroke="#ff6d4a" stroke-width="2.500" fill="none" opacity=".8"/>
<path d="M1101 545Q1108 543 1116 545L1118 564Q1108 562 1100 566Z" fill="#ff6a48" opacity=".6"/>
<path d="M964.5 542.7C967.2 538.2 972.8 537.8 978.0 536.0C983.2 534.2 986.7 532.7 995.6 532.0C1004.5 531.3 1019.5 530.6 1031.5 532.0C1043.5 533.4 1058.3 536.7 1067.3 540.3C1076.3 543.9 1082.3 547.7 1085.3 553.5C1088.3 559.3 1086.7 567.0 1085.3 575.0C1083.9 583.0 1080.7 593.7 1076.9 601.3C1073.1 608.9 1068.6 615.4 1062.6 620.4C1056.6 625.4 1049.0 629.0 1041.0 631.2C1033.0 633.4 1023.2 634.2 1014.8 633.6C1006.4 633.0 998.0 631.4 990.8 627.6C983.6 623.8 976.3 617.6 971.7 610.8C967.1 604.0 965.1 594.9 963.4 586.9C961.7 578.9 961.5 570.4 961.7 563.0C961.9 555.6 961.8 547.2 964.5 542.7Z" fill="#021d18"/>
<path d="M1138.3 555.9C1142.3 551.1 1150.2 546.5 1159.8 543.9C1169.3 541.3 1183.6 539.9 1195.6 540.3C1207.5 540.7 1221.5 543.3 1231.5 546.3C1241.5 549.3 1251.2 553.4 1255.4 558.2C1259.6 563.0 1257.0 568.2 1256.6 575.0C1256.2 581.8 1255.2 591.3 1253.0 598.9C1250.8 606.5 1248.2 614.6 1243.4 620.4C1238.6 626.2 1231.5 630.6 1224.3 633.6C1217.1 636.6 1208.4 638.1 1200.4 638.3C1192.4 638.5 1184.1 638.1 1176.5 634.7C1168.9 631.3 1160.8 624.8 1155.0 618.0C1149.2 611.2 1145.0 601.7 1141.8 594.1C1138.6 586.5 1136.5 579.0 1135.9 572.6C1135.3 566.2 1134.3 560.7 1138.3 555.9Z" fill="#021d18"/>
<g clip-path="url(#lensLc)">
<ellipse cx="1030" cy="592" rx="26" ry="48" fill="#034f3e" opacity=".9" filter="url(#b8)"/>
<ellipse cx="1028" cy="612" rx="26" ry="18" fill="#04644e" opacity=".5" filter="url(#b8)"/>
<rect x="958" y="530" width="132" height="110" fill="url(#lensTop)"/>
</g>
<g clip-path="url(#lensRc)">
<ellipse cx="1192" cy="598" rx="26" ry="48" fill="#034f3e" opacity=".9" filter="url(#b8)"/>
<ellipse cx="1194" cy="618" rx="26" ry="18" fill="#04644e" opacity=".5" filter="url(#b8)"/>
<rect x="1132" y="538" width="130" height="104" fill="url(#lensTop)"/>
</g>
<ellipse cx="952.800" cy="542.800" rx="3.600" ry="2.100" fill="#c9c0a8" stroke="#7b5a3a" stroke-width=".8" transform="rotate(8 952.800 542.800)"/>
<ellipse cx="1265.300" cy="555.400" rx="3.600" ry="2.100" fill="#c9c0a8" stroke="#7b5a3a" stroke-width=".8" transform="rotate(8 1265.300 555.400)"/>
</g>

<!-- MagicSlides logo -->
<g id="mslogo">
<path d="M1355 250h28.500a2.500 2.500 0 0 1 2.500 2.500v20a2.500 2.500 0 0 1-2.500 2.500H1355a2.500 2.500 0 0 1-2.500-2.500v-20a2.500 2.500 0 0 1 2.500-2.500z" fill="#0b0b0b"/>
<path d="M1357.500 263h6v7.500h-6zM1366.500 258.500h6v12h-6zM1375.500 254.500h6v16h-6z" fill="#fff"/>
<path d="M1365.500 275l-3.500 8M1369.300 275v8M1373 275l3.500 8" stroke="#0b0b0b" stroke-width="1.800" fill="none"/>
</g>
<text x="1396.500" y="275.300" font-family="'Liberation Sans',sans-serif" font-weight="700" font-size="25.500" fill="#0b0b0b" textLength="146.500" lengthAdjust="spacingAndGlyphs">MagicSlides</text>
<g filter="url(#distress)"><g transform="rotate(1.800 1436 553)" font-family="'DejaVu Sans Condensed','DejaVu Sans',sans-serif" font-weight="700" font-size="76" fill="#e3f4f3">
<text transform="translate(0 548.200) scale(.68 1)" x="1952.100 1997.200 2045.300 2090 2137.100 2162.100 2216.700">FEELING</text>
<text transform="translate(0 616) scale(.63 1)" x="2159.400 2211.300 2269 2323.800 2369.600">COOL!</text>
</g></g>
</svg><!-- /SLIDE --></div>

<!-- notes -->
<div class="abs" id="handle"></div>
<div class="abs" id="notes"></div>
<div class="t" id="notestext" style="left:315.3px;color:#202124;top:861.5px;font-size:18.33px;letter-spacing:-0.02px">This is the space to add speaker notes</div>

<!-- ICONS-MISC -->
<svg class="abs" id="miscicons" style="left:0;top:0;pointer-events:none" width="1919" height="920" viewBox="0 0 1919 920" fill="none">
<!-- linked rings -->
<g stroke="#444746" stroke-width="1.800">
<circle cx="25.800" cy="214.100" r="5.800"/><circle cx="28.900" cy="210.800" r="5.800"/><circle cx="32" cy="207.500" r="5.800"/>
</g>
<!-- grid -->
<path d="M37.700 871h5.400v5.400h-5.400zM47.800 871h5.400v5.400h-5.400zM37.700 880.900h5.400v5.400h-5.400zM47.800 880.900h5.400v5.400h-5.400z" stroke="#444746" stroke-width="1.900"/>
<path d="M108.600 873.200l-5.600 5.300 5.600 5.300" stroke="#444746" stroke-width="1.900"/>
<path d="M1882.600 884.700l6 5.700-6 5.700" stroke="#5f6368" stroke-width="2.400"/>
<!-- calendar -->
<g>
<path d="M1876 97.800h16v4.800h-14v13.500h-4.300v-16a2.300 2.300 0 0 1 2.300-2.300z" fill="#4285f4"/>
<path d="M1892 97.800h2.700a2.300 2.300 0 0 1 2.300 2.300v2.500h-5z" fill="#1967d2"/>
<path d="M1892 102.600h5v13.500h-5z" fill="#fbbc04"/>
<path d="M1878 116.100h14v5h-14z" fill="#34a853"/>
<path d="M1873.700 116.100h4.300v5h-2a2.300 2.300 0 0 1-2.300-2.300z" fill="#188038"/>
<path d="M1892 116.100h5l-5 5z" fill="#ea4335"/>
<path d="M1878 102.600h14v13.500h-14z" fill="#fff"/>
<text x="1885.400" y="113.800" font-family="'Liberation Sans',sans-serif" font-weight="700" font-size="11.500" fill="#4285f4" text-anchor="middle" textLength="9.600" lengthAdjust="spacingAndGlyphs">31</text>
</g>
<!-- keep -->
<rect x="1873.700" y="167.800" width="23.500" height="23.300" rx="2.300" fill="#fbbc04"/>
<circle cx="1885.400" cy="178.300" r="5" fill="#fff"/>
<path d="M1883 181h4.800v2.200H1883z M1883 184.300h5v1.800h-5z" fill="#fff"/>
<!-- tasks -->
<circle cx="1885.400" cy="249.300" r="8.600" stroke="#2684fc" stroke-width="3.700"/>
<path d="M1881.300 248.700l4.100 4.200 10.600-10.800" stroke="#2684fc" stroke-width="4"/>
<path d="M1890.300 244.800l3.300-3.300 2.700 2.700-3.300 3.300z" fill="#0066da"/>
<!-- contacts -->
<circle cx="1885.400" cy="313" r="4.100" fill="#0b57d0"/>
<path d="M1877.200 329v-4.400a5.600 5.600 0 0 1 5.600-5.600h7.300a4 4 0 0 1 4 4v2a4 4 0 0 1-4 4z" fill="#7baaf7"/>
<path d="M1880 319h8.100a3 3 0 0 1 3 3v4a3 3 0 0 1-3 3h-8.100z" fill="#0b57d0"/>
<!-- maps -->
<g>
<clipPath id="pinclip"><path d="M1885.500 378.900c4.200 0 7.500 3.300 7.500 7.400 0 2.800-1.500 5-3.200 7.200-1.700 2.100-3.300 4.200-4.300 6.700-1-2.500-2.600-4.600-4.300-6.700-1.700-2.200-3.200-4.400-3.200-7.200 0-4.100 3.300-7.400 7.500-7.400z"/></clipPath>
<g clip-path="url(#pinclip)">
<rect x="1876" y="376" width="20" height="26" fill="#34a853"/>
<path d="M1876 376h20v8l-8 8-12-10z" fill="#4285f4"/>
<path d="M1876 376h5l3 9-6 7-4-6z" fill="#ea4335"/>
<path d="M1884.500 385.500l4.500 3.500-8.500 10-4.500-6z" fill="#fbbc04"/>
<path d="M1893.500 381.500l3 2v20h-12v-5z" fill="#34a853"/>
<path d="M1880 380.500l3.800 4 4.500 4.500 5.200-7.500-3-4-6-.5z" fill="#4285f4"/>
</g>
<circle cx="1885.400" cy="386.500" r="2.400" fill="#fff"/>
</g>
<path d="M1873 445.500h25" stroke="#dadce0" stroke-width="1"/>
<path d="M1877.200 500.300h16.600M1885.500 492v16.600" stroke="#1f1f1f" stroke-width="2.300"/>
</svg>
<!-- /ICONS-MISC -->

</div>
</body>
</html>
